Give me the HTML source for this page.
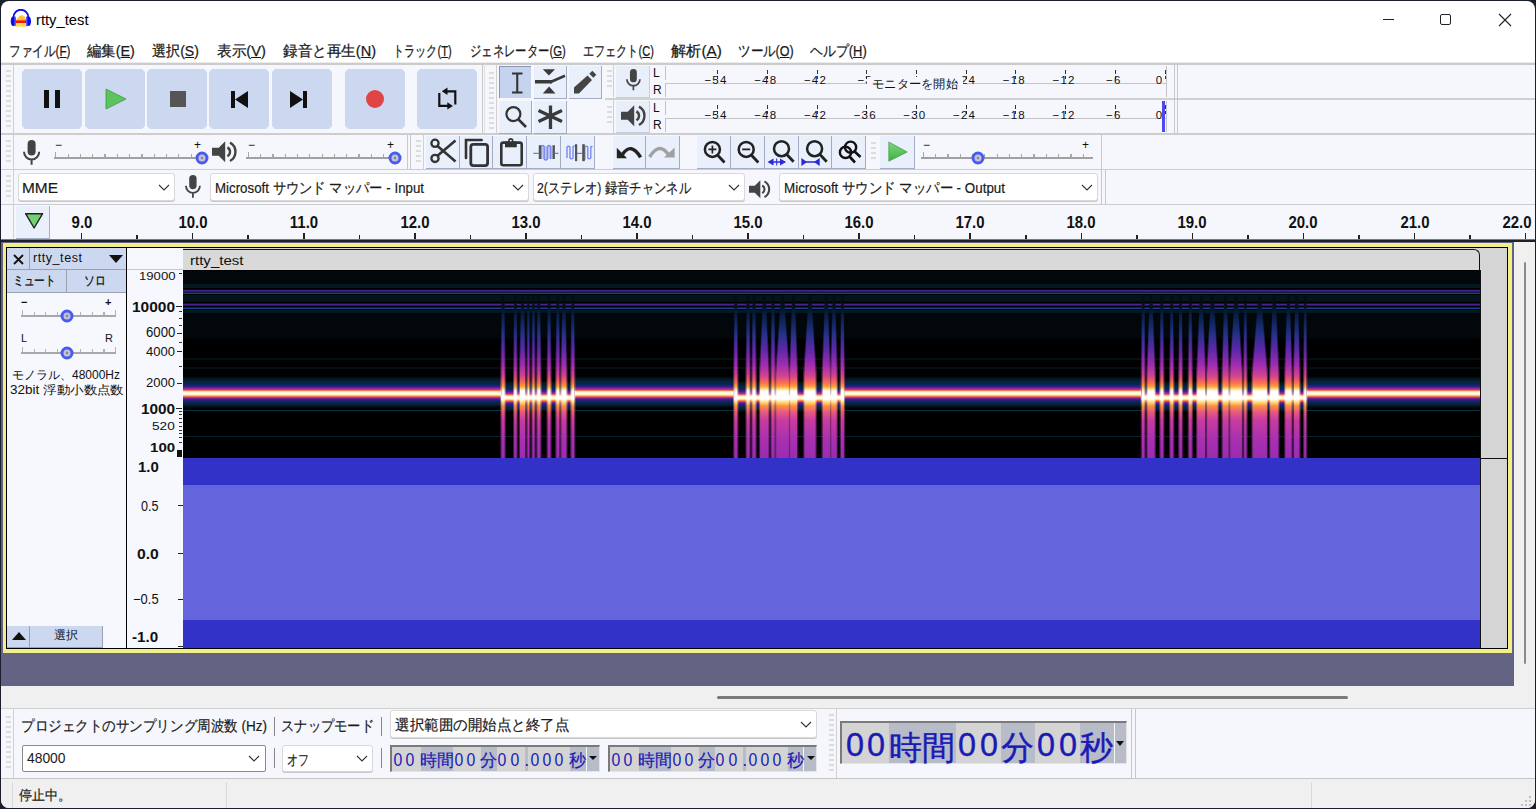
<!DOCTYPE html><html><head><meta charset="utf-8"><style>
html,body{margin:0;padding:0;}
body{width:1536px;height:809px;overflow:hidden;background:#1b1e2c;position:relative;font-family:"Liberation Sans", sans-serif;color:#000;}
#win{position:absolute;left:1px;top:1px;width:1534px;height:807px;background:#fff;border-radius:8px;overflow:hidden;}
.a{position:absolute;}
.t{position:absolute;white-space:nowrap;}
.btn{position:absolute;background:#ccd8f0;}
.grip{position:absolute;width:6px;}
</style></head><body><div id="win">
<div class="a" style="left:-1px;top:-1px;width:1536px;height:809px;">
<svg class="a" style="left:10px;top:9px" width="22" height="19" viewBox="0 0 22 19">
<path d="M6 17.5 L6 12 Q7 8 8.5 8.5 Q9.5 5.5 11 7 Q12.5 5 13.5 7.5 Q15 6.5 16 11 L16 17.5 Z" fill="#ffb820" opacity="0.9"/>
<path d="M6 14 H16 V17.5 H6 Z" fill="#ffe060" opacity="0.8"/>
<rect x="6" y="11.4" width="10" height="2.6" fill="#f21800"/>
<path d="M3.6 8 A7.3 7.2 0 0 1 18.2 8" fill="none" stroke="#1010e8" stroke-width="1.9"/>
<ellipse cx="3.35" cy="12.3" rx="2.6" ry="4.8" fill="#0a0ae8"/><ellipse cx="18.4" cy="12.3" rx="2.6" ry="4.8" fill="#0a0ae8"/>
<rect x="4.4" y="7.6" width="1.4" height="9.6" fill="#5a5af0"/><rect x="16" y="7.6" width="1.4" height="9.6" fill="#5a5af0"/>
</svg>
<div id="f1" style="position:absolute;left:36px;top:10.5px;white-space:nowrap;font-size:15px;color:#000;transform:scaleX(0.9839);transform-origin:0 0;">rtty_test</div>
<div style="position:absolute;left:1383px;top:19px;width:11px;height:1px;background:#222;"></div>
<div style="position:absolute;left:1440px;top:14px;width:11px;height:11px;border:1px solid #222;border-radius:2px;box-sizing:border-box;"></div>
<svg class="a" style="left:1498px;top:13px" width="14" height="14" viewBox="0 0 14 14"><path d="M1 1 L13 13 M13 1 L1 13" stroke="#222" stroke-width="1.1"/></svg>
<div id="f2" style="position:absolute;left:8.8px;top:42px;white-space:nowrap;font-size:15px;color:#1a1a1a;-webkit-text-stroke:0.25px #1a1a1a;transform:scaleX(0.7768);transform-origin:0 0;">ファイル(<u>F</u>)</div>
<div id="f3" style="position:absolute;left:86.9px;top:42px;white-space:nowrap;font-size:15px;color:#1a1a1a;-webkit-text-stroke:0.25px #1a1a1a;transform:scaleX(0.9577);transform-origin:0 0;">編集(<u>E</u>)</div>
<div id="f4" style="position:absolute;left:152.3px;top:42px;white-space:nowrap;font-size:15px;color:#1a1a1a;-webkit-text-stroke:0.25px #1a1a1a;transform:scaleX(0.9377);transform-origin:0 0;">選択(<u>S</u>)</div>
<div id="f5" style="position:absolute;left:216.8px;top:42px;white-space:nowrap;font-size:15px;color:#1a1a1a;-webkit-text-stroke:0.25px #1a1a1a;transform:scaleX(0.9757);transform-origin:0 0;">表示(<u>V</u>)</div>
<div id="f6" style="position:absolute;left:283.4px;top:42px;white-space:nowrap;font-size:15px;color:#1a1a1a;-webkit-text-stroke:0.25px #1a1a1a;transform:scaleX(0.9714);transform-origin:0 0;">録音と再生(<u>N</u>)</div>
<div id="f7" style="position:absolute;left:393px;top:42px;white-space:nowrap;font-size:15px;color:#1a1a1a;-webkit-text-stroke:0.25px #1a1a1a;transform:scaleX(0.7414);transform-origin:0 0;">トラック(<u>T</u>)</div>
<div id="f8" style="position:absolute;left:470.2px;top:42px;white-space:nowrap;font-size:15px;color:#1a1a1a;-webkit-text-stroke:0.25px #1a1a1a;transform:scaleX(0.7563);transform-origin:0 0;">ジェネレーター(<u>G</u>)</div>
<div id="f9" style="position:absolute;left:583px;top:42px;white-space:nowrap;font-size:15px;color:#1a1a1a;-webkit-text-stroke:0.25px #1a1a1a;transform:scaleX(0.7408);transform-origin:0 0;">エフェクト(<u>C</u>)</div>
<div id="f10" style="position:absolute;left:670.6px;top:42px;white-space:nowrap;font-size:15px;color:#1a1a1a;-webkit-text-stroke:0.25px #1a1a1a;transform:scaleX(1.0157);transform-origin:0 0;">解析(<u>A</u>)</div>
<div id="f11" style="position:absolute;left:738px;top:42px;white-space:nowrap;font-size:15px;color:#1a1a1a;-webkit-text-stroke:0.25px #1a1a1a;transform:scaleX(0.8354);transform-origin:0 0;">ツール(<u>O</u>)</div>
<div id="f12" style="position:absolute;left:810.2px;top:42px;white-space:nowrap;font-size:15px;color:#1a1a1a;-webkit-text-stroke:0.25px #1a1a1a;transform:scaleX(0.8611);transform-origin:0 0;">ヘルプ(<u>H</u>)</div>
<div style="position:absolute;left:1px;top:63px;width:1534px;height:142px;background:#f5f7fc;"></div>
<div style="position:absolute;left:1px;top:62px;width:1534px;height:1px;background:#ececec;"></div>
<div style="position:absolute;left:1px;top:63px;width:1534px;height:2px;background:#cbcbcb;"></div>
<div style="position:absolute;left:1px;top:133px;width:1534px;height:2px;background:#cdcdcd;"></div>
<div style="position:absolute;left:1px;top:169px;width:1534px;height:1px;background:#cdcdcd;"></div>
<div style="position:absolute;left:1px;top:204px;width:1534px;height:1px;background:#cdcdcd;"></div>
<div style="position:absolute;left:6px;top:70px;width:5px;height:2px;background:#dcdcdc;"></div>
<div style="position:absolute;left:6px;top:75px;width:5px;height:2px;background:#dcdcdc;"></div>
<div style="position:absolute;left:6px;top:80px;width:5px;height:2px;background:#dcdcdc;"></div>
<div style="position:absolute;left:6px;top:85px;width:5px;height:2px;background:#dcdcdc;"></div>
<div style="position:absolute;left:6px;top:90px;width:5px;height:2px;background:#dcdcdc;"></div>
<div style="position:absolute;left:6px;top:95px;width:5px;height:2px;background:#dcdcdc;"></div>
<div style="position:absolute;left:6px;top:100px;width:5px;height:2px;background:#dcdcdc;"></div>
<div style="position:absolute;left:6px;top:105px;width:5px;height:2px;background:#dcdcdc;"></div>
<div style="position:absolute;left:6px;top:110px;width:5px;height:2px;background:#dcdcdc;"></div>
<div style="position:absolute;left:6px;top:115px;width:5px;height:2px;background:#dcdcdc;"></div>
<div style="position:absolute;left:6px;top:120px;width:5px;height:2px;background:#dcdcdc;"></div>
<div style="position:absolute;left:6px;top:125px;width:5px;height:2px;background:#dcdcdc;"></div>
<div style="position:absolute;left:13px;top:64px;width:1px;height:69px;background:#d0d0d0;"></div>
<div class="btn" style="left:22px;top:69px;width:60px;height:60px;clip-path:polygon(3px 0,57px 0,60px 3px,60px 57px,57px 60px,3px 60px,0 57px,0 3px);"></div>
<div class="btn" style="left:85px;top:69px;width:60px;height:60px;clip-path:polygon(3px 0,57px 0,60px 3px,60px 57px,57px 60px,3px 60px,0 57px,0 3px);"></div>
<div class="btn" style="left:147px;top:69px;width:60px;height:60px;clip-path:polygon(3px 0,57px 0,60px 3px,60px 57px,57px 60px,3px 60px,0 57px,0 3px);"></div>
<div class="btn" style="left:209px;top:69px;width:60px;height:60px;clip-path:polygon(3px 0,57px 0,60px 3px,60px 57px,57px 60px,3px 60px,0 57px,0 3px);"></div>
<div class="btn" style="left:272px;top:69px;width:60px;height:60px;clip-path:polygon(3px 0,57px 0,60px 3px,60px 57px,57px 60px,3px 60px,0 57px,0 3px);"></div>
<div class="btn" style="left:345px;top:69px;width:60px;height:60px;clip-path:polygon(3px 0,57px 0,60px 3px,60px 57px,57px 60px,3px 60px,0 57px,0 3px);"></div>
<div class="btn" style="left:417px;top:69px;width:60px;height:60px;clip-path:polygon(3px 0,57px 0,60px 3px,60px 57px,57px 60px,3px 60px,0 57px,0 3px);"></div>
<svg class="a" style="left:22px;top:69px" width="460" height="60" viewBox="0 0 460 60">
<rect x="22" y="21" width="5" height="18" fill="#111"/><rect x="33" y="21" width="5" height="18" fill="#111"/>
<path d="M84 20 L104 30 L84 40 Z" fill="#5cc45c" stroke="#3c9a3c" stroke-width="0.8"/>
<rect x="148" y="22" width="16" height="16" fill="#555"/>
<rect x="209" y="22" width="4" height="17" fill="#111"/><path d="M226 22 L213 30.5 L226 39 Z" fill="#111"/>
<path d="M268 22 L281 30.5 L268 39 Z" fill="#111"/><rect x="281" y="22" width="4" height="17" fill="#111"/>
<circle cx="353" cy="30" r="9" fill="#e04444"/>
<path d="M417.3 24.1 V36.9 H427" fill="none" stroke="#111" stroke-width="2.2"/>
<path d="M424 22.3 H433.3 V35.5" fill="none" stroke="#111" stroke-width="2.2"/>
<path d="M419.8 22.3 L425.5 18.6 V26 Z" fill="#111"/>
<path d="M431 36.9 L425.3 33.2 V40.6 Z" fill="#111"/>
</svg>
<div style="position:absolute;left:482px;top:64px;width:1px;height:69px;background:#c8c8c8;"></div>
<div style="position:absolute;left:484px;top:64px;width:1px;height:69px;background:#e0e0e0;"></div>
<div style="position:absolute;left:488.7px;top:71.5px;width:5px;height:2px;background:#dcdcdc;"></div>
<div style="position:absolute;left:488.7px;top:76.5px;width:5px;height:2px;background:#dcdcdc;"></div>
<div style="position:absolute;left:488.7px;top:81.5px;width:5px;height:2px;background:#dcdcdc;"></div>
<div style="position:absolute;left:488.7px;top:86.5px;width:5px;height:2px;background:#dcdcdc;"></div>
<div style="position:absolute;left:488.7px;top:91.5px;width:5px;height:2px;background:#dcdcdc;"></div>
<div style="position:absolute;left:488.7px;top:96.5px;width:5px;height:2px;background:#dcdcdc;"></div>
<div style="position:absolute;left:488.7px;top:101.5px;width:5px;height:2px;background:#dcdcdc;"></div>
<div style="position:absolute;left:488.7px;top:106.5px;width:5px;height:2px;background:#dcdcdc;"></div>
<div style="position:absolute;left:488.7px;top:111.5px;width:5px;height:2px;background:#dcdcdc;"></div>
<div style="position:absolute;left:488.7px;top:116.5px;width:5px;height:2px;background:#dcdcdc;"></div>
<div style="position:absolute;left:488.7px;top:121.5px;width:5px;height:2px;background:#dcdcdc;"></div>
<div style="position:absolute;left:488.7px;top:126.5px;width:5px;height:2px;background:#dcdcdc;"></div>
<div style="position:absolute;left:496px;top:64px;width:1px;height:69px;background:#d0d0d0;"></div>
<div style="position:absolute;left:499px;top:66px;width:32px;height:32px;background:#c5d3ee;border-left:1px solid #8a96b4;border-top:1px solid #8a96b4;box-sizing:border-box;"></div>
<div style="position:absolute;left:534px;top:66px;width:33px;height:33px;background:#e9f0fc;border-right:1px solid #a4acc4;border-bottom:1px solid #a4acc4;box-sizing:border-box;"></div>
<div style="position:absolute;left:569px;top:66px;width:33px;height:33px;background:#e9f0fc;border-right:1px solid #a4acc4;border-bottom:1px solid #a4acc4;box-sizing:border-box;"></div>
<div style="position:absolute;left:499px;top:101px;width:33px;height:33px;background:#e9f0fc;border-right:1px solid #a4acc4;border-bottom:1px solid #a4acc4;box-sizing:border-box;"></div>
<div style="position:absolute;left:534px;top:101px;width:33px;height:33px;background:#e9f0fc;border-right:1px solid #a4acc4;border-bottom:1px solid #a4acc4;box-sizing:border-box;"></div>
<svg class="a" style="left:499px;top:66px" width="110" height="68" viewBox="0 0 110 68">
<path d="M13 7.5 H23.5 M18.25 7.5 V26.5 M13 26.5 H23.5" stroke="#333" stroke-width="2.1" fill="none"/>
<path d="M43.8 3.3 H56 L49.9 9.5 Z M43.8 27.5 H56.5 L50.1 20.5 Z" fill="#3a3a3a"/>
<path d="M36 15.8 H53" stroke="#3a3a3a" stroke-width="3.6"/><path d="M51 16.2 L66 9.8" stroke="#3a3a3a" stroke-width="2.6"/>
<path d="M75 21.5 L88.5 9.5 L93 14 L80 27.5 H75 Z" fill="#444"/><path d="M90.3 7.8 L93.3 4.8 L97.3 8.8 L94.3 11.8 Z" fill="#444"/>
<circle cx="14.4" cy="48.1" r="7" fill="none" stroke="#333" stroke-width="2.2"/><path d="M19.5 53.5 L27 61" stroke="#333" stroke-width="2.6"/>
<path d="M51.5 39.5 V63 M39.5 44.5 L63 55.5 M39.5 55.5 L63 44.5" stroke="#3a3a3a" stroke-width="3.3"/>
</svg>
<div style="position:absolute;left:607px;top:70px;width:5px;height:2px;background:#dcdcdc;"></div>
<div style="position:absolute;left:607px;top:75px;width:5px;height:2px;background:#dcdcdc;"></div>
<div style="position:absolute;left:607px;top:80px;width:5px;height:2px;background:#dcdcdc;"></div>
<div style="position:absolute;left:607px;top:85px;width:5px;height:2px;background:#dcdcdc;"></div>
<div style="position:absolute;left:613px;top:64px;width:1px;height:33px;background:#d0d0d0;"></div>
<div style="position:absolute;left:607px;top:106px;width:5px;height:2px;background:#dcdcdc;"></div>
<div style="position:absolute;left:607px;top:111px;width:5px;height:2px;background:#dcdcdc;"></div>
<div style="position:absolute;left:607px;top:116px;width:5px;height:2px;background:#dcdcdc;"></div>
<div style="position:absolute;left:607px;top:121px;width:5px;height:2px;background:#dcdcdc;"></div>
<div style="position:absolute;left:613px;top:100px;width:1px;height:33px;background:#d0d0d0;"></div>
<div style="position:absolute;left:605px;top:98px;width:930px;height:2px;background:#d0d0d0;"></div>
<div style="position:absolute;left:616px;top:66px;width:34px;height:32px;background:#e8effb;border-right:1px solid #c8cde0;border-bottom:1px solid #c8cde0;box-sizing:border-box;"></div>
<div style="position:absolute;left:616px;top:101px;width:34px;height:32px;background:#e8effb;border-right:1px solid #c8cde0;border-bottom:1px solid #c8cde0;box-sizing:border-box;"></div>
<svg class="a" style="left:624px;top:68px" width="22" height="28" viewBox="-2 -1 22 28"><g transform="scale(0.86)">
<rect x="4.6" y="0" width="8" height="15.5" rx="4" fill="#444"/><path d="M1 11.8 A7.6 7.6 0 0 0 16.2 11.8 M8.6 19.4 V24.8" stroke="#444" stroke-width="2" fill="none"/></g></svg>
<svg class="a" style="left:620px;top:104px" width="26" height="24" viewBox="-1 -1 26 24"><g transform="scale(1.0)">
<path d="M0 6.8 H6.7 L13.2 0.3 V21.3 L6.7 14.8 H0 Z" fill="#444"/><path d="M15.4 6.4 A5 5 0 0 1 15.4 15.2" stroke="#444" stroke-width="2.4" fill="none"/><path d="M18 1.6 A10.5 10.5 0 0 1 18 20" stroke="#444" stroke-width="2.4" fill="none"/></g></svg>
<div style="position:absolute;left:653px;top:66px;white-space:nowrap;font-size:12px;color:#111;">L</div>
<div style="position:absolute;left:653px;top:83px;white-space:nowrap;font-size:12px;color:#111;">R</div>
<div style="position:absolute;left:665px;top:67px;width:500px;height:31px;background:#f5f7fc;"></div>
<div style="position:absolute;left:665px;top:83px;width:501px;height:1px;background:#c4c4c4;"></div>
<div style="position:absolute;left:665px;top:66px;width:1px;height:14px;background:#c4c4c4;"></div>
<div style="position:absolute;left:665px;top:83px;width:1px;height:14px;background:#c4c4c4;"></div>
<div style="position:absolute;left:653px;top:101px;white-space:nowrap;font-size:12px;color:#111;">L</div>
<div style="position:absolute;left:653px;top:118px;white-space:nowrap;font-size:12px;color:#111;">R</div>
<div style="position:absolute;left:665px;top:102px;width:500px;height:31px;background:#f5f7fc;"></div>
<div style="position:absolute;left:665px;top:118px;width:501px;height:1px;background:#c4c4c4;"></div>
<div style="position:absolute;left:665px;top:101px;width:1px;height:14px;background:#c4c4c4;"></div>
<div style="position:absolute;left:665px;top:118px;width:1px;height:14px;background:#c4c4c4;"></div>
<div style="position:absolute;left:717.0px;top:70px;width:1px;height:4px;background:#333;"></div>
<div style="position:absolute;left:717.0px;top:76px;width:1px;height:3px;background:#333;"></div>
<div style="position:absolute;left:696.0px;top:74px;white-space:nowrap;font-size:11.5px;width:40px;text-align:center;color:#111;letter-spacing:1.2px;">&minus;54</div>
<div style="position:absolute;left:717.0px;top:105px;width:1px;height:4px;background:#333;"></div>
<div style="position:absolute;left:717.0px;top:111px;width:1px;height:3px;background:#333;"></div>
<div style="position:absolute;left:696.0px;top:109px;white-space:nowrap;font-size:11.5px;width:40px;text-align:center;color:#111;letter-spacing:1.2px;">&minus;54</div>
<div style="position:absolute;left:766.7px;top:70px;width:1px;height:4px;background:#333;"></div>
<div style="position:absolute;left:766.7px;top:76px;width:1px;height:3px;background:#333;"></div>
<div style="position:absolute;left:745.7px;top:74px;white-space:nowrap;font-size:11.5px;width:40px;text-align:center;color:#111;letter-spacing:1.2px;">&minus;48</div>
<div style="position:absolute;left:766.7px;top:105px;width:1px;height:4px;background:#333;"></div>
<div style="position:absolute;left:766.7px;top:111px;width:1px;height:3px;background:#333;"></div>
<div style="position:absolute;left:745.7px;top:109px;white-space:nowrap;font-size:11.5px;width:40px;text-align:center;color:#111;letter-spacing:1.2px;">&minus;48</div>
<div style="position:absolute;left:816.5px;top:70px;width:1px;height:4px;background:#333;"></div>
<div style="position:absolute;left:816.5px;top:76px;width:1px;height:3px;background:#333;"></div>
<div style="position:absolute;left:795.5px;top:74px;white-space:nowrap;font-size:11.5px;width:40px;text-align:center;color:#111;letter-spacing:1.2px;">&minus;42</div>
<div style="position:absolute;left:816.5px;top:105px;width:1px;height:4px;background:#333;"></div>
<div style="position:absolute;left:816.5px;top:111px;width:1px;height:3px;background:#333;"></div>
<div style="position:absolute;left:795.5px;top:109px;white-space:nowrap;font-size:11.5px;width:40px;text-align:center;color:#111;letter-spacing:1.2px;">&minus;42</div>
<div style="position:absolute;left:866.2px;top:70px;width:1px;height:4px;background:#333;"></div>
<div style="position:absolute;left:866.2px;top:76px;width:1px;height:3px;background:#333;"></div>
<div style="position:absolute;left:845.2px;top:74px;white-space:nowrap;font-size:11.5px;width:40px;text-align:center;color:#111;letter-spacing:1.2px;">&minus;3</div>
<div style="position:absolute;left:866.2px;top:105px;width:1px;height:4px;background:#333;"></div>
<div style="position:absolute;left:866.2px;top:111px;width:1px;height:3px;background:#333;"></div>
<div style="position:absolute;left:845.2px;top:109px;white-space:nowrap;font-size:11.5px;width:40px;text-align:center;color:#111;letter-spacing:1.2px;">&minus;36</div>
<div style="position:absolute;left:915.9px;top:70px;width:1px;height:4px;background:#333;"></div>
<div style="position:absolute;left:915.9px;top:76px;width:1px;height:3px;background:#333;"></div>
<div style="position:absolute;left:915.9px;top:105px;width:1px;height:4px;background:#333;"></div>
<div style="position:absolute;left:915.9px;top:111px;width:1px;height:3px;background:#333;"></div>
<div style="position:absolute;left:894.9px;top:109px;white-space:nowrap;font-size:11.5px;width:40px;text-align:center;color:#111;letter-spacing:1.2px;">&minus;30</div>
<div style="position:absolute;left:965.6px;top:70px;width:1px;height:4px;background:#333;"></div>
<div style="position:absolute;left:965.6px;top:76px;width:1px;height:3px;background:#333;"></div>
<div style="position:absolute;left:944.6px;top:74px;white-space:nowrap;font-size:11.5px;width:40px;text-align:center;color:#111;letter-spacing:1.2px;">&minus;24</div>
<div style="position:absolute;left:965.6px;top:105px;width:1px;height:4px;background:#333;"></div>
<div style="position:absolute;left:965.6px;top:111px;width:1px;height:3px;background:#333;"></div>
<div style="position:absolute;left:944.6px;top:109px;white-space:nowrap;font-size:11.5px;width:40px;text-align:center;color:#111;letter-spacing:1.2px;">&minus;24</div>
<div style="position:absolute;left:1015.4px;top:70px;width:1px;height:4px;background:#333;"></div>
<div style="position:absolute;left:1015.4px;top:76px;width:1px;height:3px;background:#333;"></div>
<div style="position:absolute;left:994.4px;top:74px;white-space:nowrap;font-size:11.5px;width:40px;text-align:center;color:#111;letter-spacing:1.2px;">&minus;18</div>
<div style="position:absolute;left:1015.4px;top:105px;width:1px;height:4px;background:#333;"></div>
<div style="position:absolute;left:1015.4px;top:111px;width:1px;height:3px;background:#333;"></div>
<div style="position:absolute;left:994.4px;top:109px;white-space:nowrap;font-size:11.5px;width:40px;text-align:center;color:#111;letter-spacing:1.2px;">&minus;18</div>
<div style="position:absolute;left:1065.1px;top:70px;width:1px;height:4px;background:#333;"></div>
<div style="position:absolute;left:1065.1px;top:76px;width:1px;height:3px;background:#333;"></div>
<div style="position:absolute;left:1044.1px;top:74px;white-space:nowrap;font-size:11.5px;width:40px;text-align:center;color:#111;letter-spacing:1.2px;">&minus;12</div>
<div style="position:absolute;left:1065.1px;top:105px;width:1px;height:4px;background:#333;"></div>
<div style="position:absolute;left:1065.1px;top:111px;width:1px;height:3px;background:#333;"></div>
<div style="position:absolute;left:1044.1px;top:109px;white-space:nowrap;font-size:11.5px;width:40px;text-align:center;color:#111;letter-spacing:1.2px;">&minus;12</div>
<div style="position:absolute;left:1114.8px;top:70px;width:1px;height:4px;background:#333;"></div>
<div style="position:absolute;left:1114.8px;top:76px;width:1px;height:3px;background:#333;"></div>
<div style="position:absolute;left:1093.8px;top:74px;white-space:nowrap;font-size:11.5px;width:40px;text-align:center;color:#111;letter-spacing:1.2px;">&minus;6</div>
<div style="position:absolute;left:1114.8px;top:105px;width:1px;height:4px;background:#333;"></div>
<div style="position:absolute;left:1114.8px;top:111px;width:1px;height:3px;background:#333;"></div>
<div style="position:absolute;left:1093.8px;top:109px;white-space:nowrap;font-size:11.5px;width:40px;text-align:center;color:#111;letter-spacing:1.2px;">&minus;6</div>
<div style="position:absolute;left:1164.6px;top:70px;width:1px;height:4px;background:#333;"></div>
<div style="position:absolute;left:1164.6px;top:76px;width:1px;height:3px;background:#333;"></div>
<div style="position:absolute;left:1139.5px;top:74px;white-space:nowrap;font-size:11.5px;width:40px;text-align:center;color:#111;letter-spacing:1.2px;">0</div>
<div style="position:absolute;left:1164.6px;top:105px;width:1px;height:4px;background:#333;"></div>
<div style="position:absolute;left:1164.6px;top:111px;width:1px;height:3px;background:#333;"></div>
<div style="position:absolute;left:1139.5px;top:109px;white-space:nowrap;font-size:11.5px;width:40px;text-align:center;color:#111;letter-spacing:1.2px;">0</div>
<div style="position:absolute;left:866.5px;top:77px;width:96px;height:13px;background:#f5f7fc;"></div>
<div id="f13" style="position:absolute;left:871.5px;top:75.5px;white-space:nowrap;font-size:12px;color:#111;transform:scaleX(1.0238);transform-origin:0 0;">モニターを開始</div>
<div style="position:absolute;left:1162px;top:101px;width:2.5px;height:31px;background:#4a4af0;"></div>
<div style="position:absolute;left:1166px;top:66px;width:1px;height:31px;background:#c4c4c4;"></div>
<div style="position:absolute;left:1166px;top:101px;width:1px;height:31px;background:#c4c4c4;"></div>
<div style="position:absolute;left:1174px;top:64px;width:1px;height:69px;background:#c8c8c8;"></div>
<div style="position:absolute;left:1177px;top:64px;width:1px;height:69px;background:#c8c8c8;"></div>
<div style="position:absolute;left:6px;top:140px;width:5px;height:2px;background:#dcdcdc;"></div>
<div style="position:absolute;left:6px;top:145px;width:5px;height:2px;background:#dcdcdc;"></div>
<div style="position:absolute;left:6px;top:150px;width:5px;height:2px;background:#dcdcdc;"></div>
<div style="position:absolute;left:6px;top:155px;width:5px;height:2px;background:#dcdcdc;"></div>
<div style="position:absolute;left:6px;top:160px;width:5px;height:2px;background:#dcdcdc;"></div>
<div style="position:absolute;left:13px;top:135px;width:1px;height:34px;background:#d0d0d0;"></div>
<svg class="a" style="left:21.4px;top:139.2px" width="22" height="28" viewBox="-2 -1 22 28"><g transform="scale(1.0)">
<rect x="4.6" y="0" width="8" height="15.5" rx="4" fill="#444"/><path d="M1 11.8 A7.6 7.6 0 0 0 16.2 11.8 M8.6 19.4 V24.8" stroke="#444" stroke-width="2" fill="none"/></g></svg>
<div style="position:absolute;left:53.5px;top:157px;width:148.5px;height:2px;background:#a0a0a0;"></div>
<div style="position:absolute;left:202px;top:157px;width:6px;height:2px;background:#a0a0a0;"></div>
<div style="position:absolute;left:55.2px;top:152px;width:1.3px;height:5px;background:#a8a8a8;"></div>
<div style="position:absolute;left:67.5px;top:154px;width:1.3px;height:3px;background:#a8a8a8;"></div>
<div style="position:absolute;left:79.8px;top:154px;width:1.3px;height:3px;background:#a8a8a8;"></div>
<div style="position:absolute;left:92.1px;top:154px;width:1.3px;height:3px;background:#a8a8a8;"></div>
<div style="position:absolute;left:104.4px;top:154px;width:1.3px;height:3px;background:#a8a8a8;"></div>
<div style="position:absolute;left:116.7px;top:154px;width:1.3px;height:3px;background:#a8a8a8;"></div>
<div style="position:absolute;left:129.0px;top:154px;width:1.3px;height:3px;background:#a8a8a8;"></div>
<div style="position:absolute;left:141.3px;top:154px;width:1.3px;height:3px;background:#a8a8a8;"></div>
<div style="position:absolute;left:153.6px;top:154px;width:1.3px;height:3px;background:#a8a8a8;"></div>
<div style="position:absolute;left:165.9px;top:154px;width:1.3px;height:3px;background:#a8a8a8;"></div>
<div style="position:absolute;left:178.2px;top:154px;width:1.3px;height:3px;background:#a8a8a8;"></div>
<div style="position:absolute;left:190.5px;top:154px;width:1.3px;height:3px;background:#a8a8a8;"></div>
<div style="position:absolute;left:202.8px;top:154px;width:1.3px;height:3px;background:#a8a8a8;"></div>
<svg class="a" style="left:195px;top:151px" width="14" height="14"><circle cx="7" cy="7" r="5" fill="#c4c6d8" stroke="#4a5af0" stroke-width="3"/><circle cx="7" cy="7" r="1.4" fill="#8a8a9a"/></svg>
<div style="position:absolute;left:55px;top:138px;white-space:nowrap;font-size:12px;color:#111;">&minus;</div>
<div style="position:absolute;left:194px;top:138px;white-space:nowrap;font-size:12px;color:#111;">+</div>
<svg class="a" style="left:211.3px;top:140.2px" width="26" height="24" viewBox="-1 -1 26 24"><g transform="scale(1.0)">
<path d="M0 6.8 H6.7 L13.2 0.3 V21.3 L6.7 14.8 H0 Z" fill="#444"/><path d="M15.4 6.4 A5 5 0 0 1 15.4 15.2" stroke="#444" stroke-width="2.4" fill="none"/><path d="M18 1.6 A10.5 10.5 0 0 1 18 20" stroke="#444" stroke-width="2.4" fill="none"/></g></svg>
<div style="position:absolute;left:246px;top:157px;width:149px;height:2px;background:#a0a0a0;"></div>
<div style="position:absolute;left:395px;top:157px;width:6px;height:2px;background:#a0a0a0;"></div>
<div style="position:absolute;left:247.7px;top:152px;width:1.3px;height:5px;background:#a8a8a8;"></div>
<div style="position:absolute;left:260.0px;top:154px;width:1.3px;height:3px;background:#a8a8a8;"></div>
<div style="position:absolute;left:272.3px;top:154px;width:1.3px;height:3px;background:#a8a8a8;"></div>
<div style="position:absolute;left:284.6px;top:154px;width:1.3px;height:3px;background:#a8a8a8;"></div>
<div style="position:absolute;left:296.9px;top:154px;width:1.3px;height:3px;background:#a8a8a8;"></div>
<div style="position:absolute;left:309.2px;top:154px;width:1.3px;height:3px;background:#a8a8a8;"></div>
<div style="position:absolute;left:321.5px;top:154px;width:1.3px;height:3px;background:#a8a8a8;"></div>
<div style="position:absolute;left:333.8px;top:154px;width:1.3px;height:3px;background:#a8a8a8;"></div>
<div style="position:absolute;left:346.1px;top:154px;width:1.3px;height:3px;background:#a8a8a8;"></div>
<div style="position:absolute;left:358.4px;top:154px;width:1.3px;height:3px;background:#a8a8a8;"></div>
<div style="position:absolute;left:370.7px;top:154px;width:1.3px;height:3px;background:#a8a8a8;"></div>
<div style="position:absolute;left:383.0px;top:154px;width:1.3px;height:3px;background:#a8a8a8;"></div>
<div style="position:absolute;left:395.3px;top:154px;width:1.3px;height:3px;background:#a8a8a8;"></div>
<svg class="a" style="left:388px;top:151px" width="14" height="14"><circle cx="7" cy="7" r="5" fill="#c4c6d8" stroke="#4a5af0" stroke-width="3"/><circle cx="7" cy="7" r="1.4" fill="#8a8a9a"/></svg>
<div style="position:absolute;left:248px;top:138px;white-space:nowrap;font-size:12px;color:#111;">&minus;</div>
<div style="position:absolute;left:387px;top:138px;white-space:nowrap;font-size:12px;color:#111;">+</div>
<div style="position:absolute;left:407px;top:135px;width:1px;height:34px;background:#c8c8c8;"></div>
<div style="position:absolute;left:410px;top:135px;width:1px;height:34px;background:#c8c8c8;"></div>
<div style="position:absolute;left:416px;top:140px;width:5px;height:2px;background:#dcdcdc;"></div>
<div style="position:absolute;left:416px;top:145px;width:5px;height:2px;background:#dcdcdc;"></div>
<div style="position:absolute;left:416px;top:150px;width:5px;height:2px;background:#dcdcdc;"></div>
<div style="position:absolute;left:416px;top:155px;width:5px;height:2px;background:#dcdcdc;"></div>
<div style="position:absolute;left:416px;top:160px;width:5px;height:2px;background:#dcdcdc;"></div>
<div style="position:absolute;left:423px;top:135px;width:1px;height:34px;background:#d0d0d0;"></div>
<div style="position:absolute;left:426px;top:136px;width:34px;height:33px;background:#e9f0fc;border-right:1px solid #a4acc4;border-bottom:1px solid #a4acc4;box-sizing:border-box;"></div>
<div style="position:absolute;left:460px;top:136px;width:33px;height:33px;background:#e9f0fc;border-right:1px solid #a4acc4;border-bottom:1px solid #a4acc4;box-sizing:border-box;"></div>
<div style="position:absolute;left:493px;top:136px;width:34px;height:33px;background:#e9f0fc;border-right:1px solid #a4acc4;border-bottom:1px solid #a4acc4;box-sizing:border-box;"></div>
<div style="position:absolute;left:527px;top:136px;width:34px;height:33px;background:#e9f0fc;border-right:1px solid #a4acc4;border-bottom:1px solid #a4acc4;box-sizing:border-box;"></div>
<div style="position:absolute;left:561px;top:136px;width:34px;height:33px;background:#e9f0fc;border-right:1px solid #a4acc4;border-bottom:1px solid #a4acc4;box-sizing:border-box;"></div>
<div style="position:absolute;left:613px;top:136px;width:33px;height:33px;background:#e9f0fc;border-right:1px solid #a4acc4;border-bottom:1px solid #a4acc4;box-sizing:border-box;"></div>
<div style="position:absolute;left:646px;top:136px;width:34px;height:33px;background:#e9f0fc;border-right:1px solid #a4acc4;border-bottom:1px solid #a4acc4;box-sizing:border-box;"></div>
<svg class="a" style="left:426px;top:136px" width="260" height="33" viewBox="0 0 260 33">
<circle cx="9" cy="7.3" r="3.6" fill="none" stroke="#333" stroke-width="2.3"/><circle cx="9" cy="22.4" r="3.6" fill="none" stroke="#333" stroke-width="2.3"/>
<path d="M11.5 10 L29.5 25.5" stroke="#333" stroke-width="2.6"/><path d="M11.5 19.8 L29.5 4.5" stroke="#333" stroke-width="2.6"/>
<path d="M40 22 V4 H55.6" fill="none" stroke="#333" stroke-width="2.6" stroke-linecap="round"/><rect x="44.8" y="8.4" width="16.8" height="21.2" rx="2.5" fill="none" stroke="#333" stroke-width="2.8"/>
<rect x="75.3" y="6.6" width="20.4" height="22.6" rx="2" fill="none" stroke="#333" stroke-width="2.6"/><rect x="79" y="5.5" width="11.8" height="5.8" fill="#333"/><circle cx="84.8" cy="4.6" r="2.6" fill="#333"/><circle cx="84.8" cy="4.6" r="0.9" fill="#fff"/>
<path d="M107.3 17.4 H112.75 M128.9 17.4 H132.5" stroke="#6a7cf0" stroke-width="1.3"/>
<path d="M115 10 H126.5 V23 H115 Z" fill="#aab6f2" opacity="0.7"/>
<path d="M115 23 V10.5 Q116.6 8.5 118.2 10.5 V23 Q119.8 25 121.4 23 V10.5 Q123 8.5 124.6 10.5 V23" stroke="#7a8af2" stroke-width="1.4" fill="none"/>
<rect x="112.75" y="9.2" width="2.4" height="13.8" fill="#555"/><rect x="126.5" y="9.2" width="2.4" height="13.8" fill="#555"/>
<path d="M141 22 V11 Q142.5 9.5 144 11 V22 Q145.5 23.5 147 22 V11 Q148 9.5 149 10" stroke="#7a8af2" stroke-width="1.4" fill="none"/>
<path d="M151 17.4 H156.2" stroke="#6a7cf0" stroke-width="1.3"/>
<path d="M158.8 24 V11 Q160.3 9.5 161.8 11 V22 Q163.3 23.5 164.8 22 V11 Q165.6 10 166.4 11" stroke="#7a8af2" stroke-width="1.4" fill="none"/>
<rect x="149" y="8.2" width="2.2" height="17" fill="#555"/><rect x="156.2" y="8.2" width="2.6" height="17" fill="#555"/>
<path d="M190.8 11.7 V22.2 H201 Z" fill="#222"/><path d="M196.5 18.5 Q205 5.5 214.6 21.4" stroke="#222" stroke-width="3.4" fill="none"/>
<path d="M248.6 11.5 V21.5 H238 Z" fill="#a0a0a0"/><path d="M223.6 21 Q233 5.5 242.5 18.5" stroke="#a0a0a0" stroke-width="3.4" fill="none"/>
</svg>
<div style="position:absolute;left:697px;top:136px;width:34px;height:33px;background:#e9f0fc;border-right:1px solid #a4acc4;border-bottom:1px solid #a4acc4;box-sizing:border-box;"></div>
<div style="position:absolute;left:731px;top:136px;width:34px;height:33px;background:#e9f0fc;border-right:1px solid #a4acc4;border-bottom:1px solid #a4acc4;box-sizing:border-box;"></div>
<div style="position:absolute;left:765px;top:136px;width:34px;height:33px;background:#e9f0fc;border-right:1px solid #a4acc4;border-bottom:1px solid #a4acc4;box-sizing:border-box;"></div>
<div style="position:absolute;left:799px;top:136px;width:33px;height:33px;background:#e9f0fc;border-right:1px solid #a4acc4;border-bottom:1px solid #a4acc4;box-sizing:border-box;"></div>
<div style="position:absolute;left:832px;top:136px;width:34px;height:33px;background:#e9f0fc;border-right:1px solid #a4acc4;border-bottom:1px solid #a4acc4;box-sizing:border-box;"></div>
<svg class="a" style="left:694px;top:134px" width="226" height="36" viewBox="694 134 226 36">
<circle cx="712.4" cy="149.4" r="7.5" fill="none" stroke="#222" stroke-width="2.5"/><path d="M717.5 155 L724.5 162.5" stroke="#222" stroke-width="2.8"/><path d="M708.4 149.4 H716.4 M712.4 145.4 V153.4" stroke="#222" stroke-width="1.7"/>
<circle cx="746.2" cy="149.4" r="7.5" fill="none" stroke="#222" stroke-width="2.5"/><path d="M751.3 155 L758.3 162.5" stroke="#222" stroke-width="2.8"/><path d="M742.2 149.4 H750.2" stroke="#222" stroke-width="1.7"/>
<circle cx="781.5" cy="148.7" r="7.5" fill="none" stroke="#222" stroke-width="2.5"/><path d="M786.6 154.3 L793.6 161.8" stroke="#222" stroke-width="2.8"/>
<path d="M769 162 H785" stroke="#2a2ad8" stroke-width="1.5"/><path d="M767.5 162 L773.5 158.5 V165.5 Z M786 162 L780 158.5 V165.5 Z" fill="#2a2ad8"/><path d="M776.7 158.5 V165.5" stroke="#2a2ad8" stroke-width="1"/>
<circle cx="814.6" cy="148.7" r="7.5" fill="none" stroke="#222" stroke-width="2.5"/><path d="M819.7 154.3 L826.7 161.8" stroke="#222" stroke-width="2.8"/>
<path d="M802 162 H819" stroke="#2a2ad8" stroke-width="1.5"/><path d="M801.4 158 V166 L807 162 Z M819.7 158 V166 L814 162 Z" fill="#2a2ad8"/>
<circle cx="845.5" cy="152.4" r="5.6" fill="none" stroke="#111" stroke-width="2.4"/><circle cx="850.6" cy="147.2" r="5.6" fill="none" stroke="#111" stroke-width="2.4"/><path d="M849.5 156.5 L855 162.5 M854.6 151.5 L860.5 157" stroke="#111" stroke-width="2.6"/>
</svg>
<div style="position:absolute;left:871px;top:142px;width:5px;height:2px;background:#dcdcdc;"></div>
<div style="position:absolute;left:871px;top:147px;width:5px;height:2px;background:#dcdcdc;"></div>
<div style="position:absolute;left:871px;top:152px;width:5px;height:2px;background:#dcdcdc;"></div>
<div style="position:absolute;left:871px;top:157px;width:5px;height:2px;background:#dcdcdc;"></div>
<div style="position:absolute;left:880px;top:136px;width:35px;height:33px;background:#e9f0fc;border-right:1px solid #a4acc4;border-bottom:1px solid #a4acc4;box-sizing:border-box;"></div>
<svg class="a" style="left:880px;top:134px" width="34" height="36"><defs><linearGradient id="pg" x1="0" y1="0" x2="0" y2="1"><stop offset="0" stop-color="#7ad87a"/><stop offset="1" stop-color="#44b044"/></linearGradient></defs><path d="M8.8 8 L27.2 18 L8.8 27.2 Z" fill="url(#pg)" stroke="#3c9a3c" stroke-width="0.7"/></svg>
<div style="position:absolute;left:921px;top:157px;width:57px;height:2px;background:#a0a0a0;"></div>
<div style="position:absolute;left:978px;top:157px;width:115px;height:2px;background:#a0a0a0;"></div>
<div style="position:absolute;left:922.7px;top:152px;width:1.3px;height:5px;background:#a8a8a8;"></div>
<div style="position:absolute;left:935.0px;top:154px;width:1.3px;height:3px;background:#a8a8a8;"></div>
<div style="position:absolute;left:947.3px;top:154px;width:1.3px;height:3px;background:#a8a8a8;"></div>
<div style="position:absolute;left:959.6px;top:154px;width:1.3px;height:3px;background:#a8a8a8;"></div>
<div style="position:absolute;left:971.9px;top:154px;width:1.3px;height:3px;background:#a8a8a8;"></div>
<div style="position:absolute;left:984.2px;top:154px;width:1.3px;height:3px;background:#a8a8a8;"></div>
<div style="position:absolute;left:996.5px;top:154px;width:1.3px;height:3px;background:#a8a8a8;"></div>
<div style="position:absolute;left:1008.8px;top:154px;width:1.3px;height:3px;background:#a8a8a8;"></div>
<div style="position:absolute;left:1021.1px;top:154px;width:1.3px;height:3px;background:#a8a8a8;"></div>
<div style="position:absolute;left:1033.4px;top:154px;width:1.3px;height:3px;background:#a8a8a8;"></div>
<div style="position:absolute;left:1045.7px;top:154px;width:1.3px;height:3px;background:#a8a8a8;"></div>
<div style="position:absolute;left:1058.0px;top:154px;width:1.3px;height:3px;background:#a8a8a8;"></div>
<div style="position:absolute;left:1070.3px;top:154px;width:1.3px;height:3px;background:#a8a8a8;"></div>
<div style="position:absolute;left:1082.6px;top:154px;width:1.3px;height:3px;background:#a8a8a8;"></div>
<svg class="a" style="left:971px;top:151px" width="14" height="14"><circle cx="7" cy="7" r="5" fill="#c4c6d8" stroke="#4a5af0" stroke-width="3"/><circle cx="7" cy="7" r="1.4" fill="#8a8a9a"/></svg>
<div style="position:absolute;left:923px;top:138px;white-space:nowrap;font-size:12px;color:#111;">&minus;</div>
<div style="position:absolute;left:1082px;top:138px;white-space:nowrap;font-size:12px;color:#111;">+</div>
<div style="position:absolute;left:1101px;top:135px;width:1px;height:70px;background:#c8c8c8;"></div>
<div style="position:absolute;left:1105px;top:170px;width:1px;height:35px;background:#c8c8c8;"></div>
<div style="position:absolute;left:6px;top:175px;width:5px;height:2px;background:#dcdcdc;"></div>
<div style="position:absolute;left:6px;top:180px;width:5px;height:2px;background:#dcdcdc;"></div>
<div style="position:absolute;left:6px;top:185px;width:5px;height:2px;background:#dcdcdc;"></div>
<div style="position:absolute;left:6px;top:190px;width:5px;height:2px;background:#dcdcdc;"></div>
<div style="position:absolute;left:6px;top:195px;width:5px;height:2px;background:#dcdcdc;"></div>
<div style="position:absolute;left:13px;top:170px;width:1px;height:34px;background:#d0d0d0;"></div>
<div class="a" style="left:18px;top:173px;width:157px;height:28px;background:#fff;border:1px solid #d9d9d9;border-radius:3px;box-sizing:border-box;box-shadow:0 1px 0 #c8c8c8;"></div>
<div id="f14" style="position:absolute;left:22px;top:179px;white-space:nowrap;font-size:15px;color:#1a1a1a;-webkit-text-stroke:0.2px #1a1a1a;transform:scaleX(1.0286);transform-origin:0 0;">MME</div>
<svg class="a" style="left:158px;top:184px" width="12" height="7"><path d="M1 1 L6 6 L11 1" stroke="#333" stroke-width="1.1" fill="none"/></svg>
<svg class="a" style="left:183px;top:174px" width="22" height="28" viewBox="-2 -1 22 28"><g transform="scale(0.92)">
<rect x="4.6" y="0" width="8" height="15.5" rx="4" fill="#444"/><path d="M1 11.8 A7.6 7.6 0 0 0 16.2 11.8 M8.6 19.4 V24.8" stroke="#444" stroke-width="2" fill="none"/></g></svg>
<div class="a" style="left:210px;top:173px;width:319px;height:28px;background:#fff;border:1px solid #d9d9d9;border-radius:3px;box-sizing:border-box;box-shadow:0 1px 0 #c8c8c8;"></div>
<div id="f15" style="position:absolute;left:214.5px;top:179px;white-space:nowrap;font-size:15px;color:#1a1a1a;-webkit-text-stroke:0.2px #1a1a1a;transform:scaleX(0.8861);transform-origin:0 0;">Microsoft サウンド マッパー - Input</div>
<svg class="a" style="left:512px;top:184px" width="12" height="7"><path d="M1 1 L6 6 L11 1" stroke="#333" stroke-width="1.1" fill="none"/></svg>
<div class="a" style="left:533px;top:173px;width:212px;height:28px;background:#fff;border:1px solid #d9d9d9;border-radius:3px;box-sizing:border-box;box-shadow:0 1px 0 #c8c8c8;"></div>
<div id="f16" style="position:absolute;left:537px;top:179px;white-space:nowrap;font-size:15px;color:#1a1a1a;-webkit-text-stroke:0.2px #1a1a1a;transform:scaleX(0.8213);transform-origin:0 0;">2(ステレオ) 録音チャンネル</div>
<svg class="a" style="left:728px;top:184px" width="12" height="7"><path d="M1 1 L6 6 L11 1" stroke="#333" stroke-width="1.1" fill="none"/></svg>
<svg class="a" style="left:748px;top:178.5px" width="26" height="24" viewBox="-1 -1 26 24"><g transform="scale(0.86)">
<path d="M0 6.8 H6.7 L13.2 0.3 V21.3 L6.7 14.8 H0 Z" fill="#444"/><path d="M15.4 6.4 A5 5 0 0 1 15.4 15.2" stroke="#444" stroke-width="2.4" fill="none"/><path d="M18 1.6 A10.5 10.5 0 0 1 18 20" stroke="#444" stroke-width="2.4" fill="none"/></g></svg>
<div class="a" style="left:779px;top:173px;width:319px;height:28px;background:#fff;border:1px solid #d9d9d9;border-radius:3px;box-sizing:border-box;box-shadow:0 1px 0 #c8c8c8;"></div>
<div id="f17" style="position:absolute;left:784px;top:179px;white-space:nowrap;font-size:15px;color:#1a1a1a;-webkit-text-stroke:0.2px #1a1a1a;transform:scaleX(0.8928);transform-origin:0 0;">Microsoft サウンド マッパー - Output</div>
<svg class="a" style="left:1081px;top:184px" width="12" height="7"><path d="M1 1 L6 6 L11 1" stroke="#333" stroke-width="1.1" fill="none"/></svg>
<div style="position:absolute;left:1px;top:205px;width:1534px;height:35px;background:#f5f7fc;"></div>
<div style="position:absolute;left:16px;top:206px;width:34px;height:33px;background:#e9f0fc;border-right:1.5px solid #a8b0c4;border-bottom:1.5px solid #a8b0c4;box-sizing:border-box;"></div>
<svg class="a" style="left:24px;top:211px" width="20" height="19"><path d="M1.6 2.7 H18.6 L10.1 17 Z" fill="#72d072" stroke="#222" stroke-width="1.4" stroke-linejoin="round"/></svg>
<div style="position:absolute;left:13px;top:205px;width:1px;height:35px;background:#d0d0d0;"></div>
<div style="position:absolute;left:80.85px;top:232.5px;width:1.5px;height:7px;background:#222;"></div>
<div class="t" style="left:41.60px;top:213px;width:80px;text-align:center;font-size:17px;font-weight:bold;color:#111;transform:scaleX(0.88);">9.0</div>
<div style="position:absolute;left:136.39px;top:235.2px;width:1.5px;height:4px;background:#222;"></div>
<div style="position:absolute;left:191.93px;top:232.5px;width:1.5px;height:7px;background:#222;"></div>
<div class="t" style="left:152.68px;top:213px;width:80px;text-align:center;font-size:17px;font-weight:bold;color:#111;transform:scaleX(0.88);">10.0</div>
<div style="position:absolute;left:247.47px;top:235.2px;width:1.5px;height:4px;background:#222;"></div>
<div style="position:absolute;left:303.01px;top:232.5px;width:1.5px;height:7px;background:#222;"></div>
<div class="t" style="left:263.76px;top:213px;width:80px;text-align:center;font-size:17px;font-weight:bold;color:#111;transform:scaleX(0.88);">11.0</div>
<div style="position:absolute;left:358.55px;top:235.2px;width:1.5px;height:4px;background:#222;"></div>
<div style="position:absolute;left:414.09px;top:232.5px;width:1.5px;height:7px;background:#222;"></div>
<div class="t" style="left:374.84px;top:213px;width:80px;text-align:center;font-size:17px;font-weight:bold;color:#111;transform:scaleX(0.88);">12.0</div>
<div style="position:absolute;left:469.63px;top:235.2px;width:1.5px;height:4px;background:#222;"></div>
<div style="position:absolute;left:525.17px;top:232.5px;width:1.5px;height:7px;background:#222;"></div>
<div class="t" style="left:485.92px;top:213px;width:80px;text-align:center;font-size:17px;font-weight:bold;color:#111;transform:scaleX(0.88);">13.0</div>
<div style="position:absolute;left:580.71px;top:235.2px;width:1.5px;height:4px;background:#222;"></div>
<div style="position:absolute;left:636.25px;top:232.5px;width:1.5px;height:7px;background:#222;"></div>
<div class="t" style="left:597.00px;top:213px;width:80px;text-align:center;font-size:17px;font-weight:bold;color:#111;transform:scaleX(0.88);">14.0</div>
<div style="position:absolute;left:691.79px;top:235.2px;width:1.5px;height:4px;background:#222;"></div>
<div style="position:absolute;left:747.33px;top:232.5px;width:1.5px;height:7px;background:#222;"></div>
<div class="t" style="left:708.08px;top:213px;width:80px;text-align:center;font-size:17px;font-weight:bold;color:#111;transform:scaleX(0.88);">15.0</div>
<div style="position:absolute;left:802.87px;top:235.2px;width:1.5px;height:4px;background:#222;"></div>
<div style="position:absolute;left:858.41px;top:232.5px;width:1.5px;height:7px;background:#222;"></div>
<div class="t" style="left:819.16px;top:213px;width:80px;text-align:center;font-size:17px;font-weight:bold;color:#111;transform:scaleX(0.88);">16.0</div>
<div style="position:absolute;left:913.95px;top:235.2px;width:1.5px;height:4px;background:#222;"></div>
<div style="position:absolute;left:969.49px;top:232.5px;width:1.5px;height:7px;background:#222;"></div>
<div class="t" style="left:930.24px;top:213px;width:80px;text-align:center;font-size:17px;font-weight:bold;color:#111;transform:scaleX(0.88);">17.0</div>
<div style="position:absolute;left:1025.03px;top:235.2px;width:1.5px;height:4px;background:#222;"></div>
<div style="position:absolute;left:1080.57px;top:232.5px;width:1.5px;height:7px;background:#222;"></div>
<div class="t" style="left:1041.32px;top:213px;width:80px;text-align:center;font-size:17px;font-weight:bold;color:#111;transform:scaleX(0.88);">18.0</div>
<div style="position:absolute;left:1136.11px;top:235.2px;width:1.5px;height:4px;background:#222;"></div>
<div style="position:absolute;left:1191.65px;top:232.5px;width:1.5px;height:7px;background:#222;"></div>
<div class="t" style="left:1152.40px;top:213px;width:80px;text-align:center;font-size:17px;font-weight:bold;color:#111;transform:scaleX(0.88);">19.0</div>
<div style="position:absolute;left:1247.19px;top:235.2px;width:1.5px;height:4px;background:#222;"></div>
<div style="position:absolute;left:1302.73px;top:232.5px;width:1.5px;height:7px;background:#222;"></div>
<div class="t" style="left:1263.48px;top:213px;width:80px;text-align:center;font-size:17px;font-weight:bold;color:#111;transform:scaleX(0.88);">20.0</div>
<div style="position:absolute;left:1358.27px;top:235.2px;width:1.5px;height:4px;background:#222;"></div>
<div style="position:absolute;left:1413.81px;top:232.5px;width:1.5px;height:7px;background:#222;"></div>
<div class="t" style="left:1374.56px;top:213px;width:80px;text-align:center;font-size:17px;font-weight:bold;color:#111;transform:scaleX(0.88);">21.0</div>
<div style="position:absolute;left:1469.35px;top:235.2px;width:1.5px;height:4px;background:#222;"></div>
<div style="position:absolute;left:1524.89px;top:232.5px;width:1.5px;height:7px;background:#222;"></div>
<div class="t" style="left:1477.00px;top:213px;width:80px;text-align:center;font-size:17px;font-weight:bold;color:#111;transform:scaleX(0.88);">22.0</div>
<div style="position:absolute;left:1px;top:239px;width:1534px;height:1px;background:#7a7a80;"></div>
<div style="position:absolute;left:1px;top:240px;width:1534px;height:3px;background:#202028;"></div>
<div style="position:absolute;left:1px;top:242px;width:1513px;height:444px;background:#636484;"></div>
<div style="position:absolute;left:3px;top:243px;width:1509px;height:410px;background:#f2ee8a;"></div>
<div style="position:absolute;left:6px;top:247px;width:1502px;height:402px;background:#000;"></div>
<div style="position:absolute;left:7px;top:248px;width:119px;height:400px;background:#f6f8fd;"></div>
<div style="position:absolute;left:127px;top:248px;width:56px;height:400px;background:#f6f8fd;"></div>
<div style="position:absolute;left:183px;top:248px;width:1324px;height:400px;background:#d5d5d5;"></div>
<div style="position:absolute;left:7px;top:248px;width:23px;height:22px;background:#ccd8f0;border-right:1px solid #9aa0b0;border-bottom:1px solid #9aa0b0;box-sizing:border-box;"></div>
<div style="position:absolute;left:30px;top:248px;width:97px;height:22px;background:#ccd8f0;border-right:1px solid #9aa0b0;border-bottom:1px solid #9aa0b0;box-sizing:border-box;"></div>
<div style="position:absolute;left:7px;top:270px;width:60px;height:23px;background:#ccd8f0;border-right:1px solid #9aa0b0;border-bottom:1px solid #9aa0b0;box-sizing:border-box;"></div>
<div style="position:absolute;left:67px;top:270px;width:60px;height:23px;background:#ccd8f0;border-right:1px solid #9aa0b0;border-bottom:1px solid #9aa0b0;box-sizing:border-box;"></div>
<svg class="a" style="left:12px;top:253px" width="13" height="13"><path d="M2 2 L11 11 M11 2 L2 11" stroke="#111" stroke-width="1.8"/></svg>
<div id="f18" style="position:absolute;left:32.5px;top:251px;white-space:nowrap;font-size:12px;color:#111;letter-spacing:0.5px;transform:scaleX(1.0490);transform-origin:0 0;">rtty_test</div>
<svg class="a" style="left:108px;top:254px" width="16" height="10"><path d="M1 1 H15 L8 9 Z" fill="#111"/></svg>
<div id="f19" style="position:absolute;left:12.5px;top:273px;white-space:nowrap;font-size:12.5px;color:#111;-webkit-text-stroke:0.3px #111;transform:scaleX(0.8269);transform-origin:0 0;">ミュート</div>
<div id="f20" style="position:absolute;left:84px;top:273px;white-space:nowrap;font-size:12.5px;color:#111;-webkit-text-stroke:0.3px #111;transform:scaleX(0.8269);transform-origin:0 0;">ソロ</div>
<div style="position:absolute;left:21px;top:295.5px;white-space:nowrap;font-size:11px;color:#111;font-weight:bold;">&minus;</div>
<div style="position:absolute;left:105px;top:295.5px;white-space:nowrap;font-size:11px;color:#111;font-weight:bold;">+</div>
<div style="position:absolute;left:21px;top:315px;width:95px;height:2px;background:#a8a8a8;"></div>
<div style="position:absolute;left:22.0px;top:310px;width:1.2px;height:5px;background:#b4b4b4;"></div>
<div style="position:absolute;left:33.6px;top:312px;width:1.2px;height:3px;background:#b4b4b4;"></div>
<div style="position:absolute;left:45.2px;top:312px;width:1.2px;height:3px;background:#b4b4b4;"></div>
<div style="position:absolute;left:56.9px;top:312px;width:1.2px;height:3px;background:#b4b4b4;"></div>
<div style="position:absolute;left:68.5px;top:312px;width:1.2px;height:3px;background:#b4b4b4;"></div>
<div style="position:absolute;left:80.1px;top:312px;width:1.2px;height:3px;background:#b4b4b4;"></div>
<div style="position:absolute;left:91.8px;top:312px;width:1.2px;height:3px;background:#b4b4b4;"></div>
<div style="position:absolute;left:103.4px;top:312px;width:1.2px;height:3px;background:#b4b4b4;"></div>
<div style="position:absolute;left:115.0px;top:310px;width:1.2px;height:5px;background:#b4b4b4;"></div>
<svg class="a" style="left:60px;top:309px" width="14" height="14"><circle cx="7" cy="7" r="5" fill="#c4c6d8" stroke="#4a5af0" stroke-width="3"/><circle cx="7" cy="7" r="1.4" fill="#8a8a9a"/></svg>
<div style="position:absolute;left:21px;top:332px;white-space:nowrap;font-size:11px;color:#111;">L</div>
<div style="position:absolute;left:105px;top:332px;white-space:nowrap;font-size:11px;color:#111;">R</div>
<div style="position:absolute;left:21px;top:352px;width:95px;height:2px;background:#a8a8a8;"></div>
<div style="position:absolute;left:22.0px;top:347px;width:1.2px;height:5px;background:#b4b4b4;"></div>
<div style="position:absolute;left:33.6px;top:349px;width:1.2px;height:3px;background:#b4b4b4;"></div>
<div style="position:absolute;left:45.2px;top:349px;width:1.2px;height:3px;background:#b4b4b4;"></div>
<div style="position:absolute;left:56.9px;top:349px;width:1.2px;height:3px;background:#b4b4b4;"></div>
<div style="position:absolute;left:68.5px;top:349px;width:1.2px;height:3px;background:#b4b4b4;"></div>
<div style="position:absolute;left:80.1px;top:349px;width:1.2px;height:3px;background:#b4b4b4;"></div>
<div style="position:absolute;left:91.8px;top:349px;width:1.2px;height:3px;background:#b4b4b4;"></div>
<div style="position:absolute;left:103.4px;top:349px;width:1.2px;height:3px;background:#b4b4b4;"></div>
<div style="position:absolute;left:115.0px;top:347px;width:1.2px;height:5px;background:#b4b4b4;"></div>
<svg class="a" style="left:60px;top:346px" width="14" height="14"><circle cx="7" cy="7" r="5" fill="#c4c6d8" stroke="#4a5af0" stroke-width="3"/><circle cx="7" cy="7" r="1.4" fill="#8a8a9a"/></svg>
<div id="f21" style="position:absolute;left:11.5px;top:366.5px;white-space:nowrap;font-size:12px;color:#111;transform:scaleX(0.9996);transform-origin:0 0;">モノラル、48000Hz</div>
<div id="f22" style="position:absolute;left:10px;top:382px;white-space:nowrap;font-size:12px;color:#111;transform:scaleX(1.1247);transform-origin:0 0;">32bit 浮動小数点数</div>
<div style="position:absolute;left:7px;top:626px;width:23px;height:22px;background:#ccd8f0;border-right:1px solid #9aa0b0;border-bottom:1px solid #9aa0b0;box-sizing:border-box;"></div>
<div style="position:absolute;left:30px;top:626px;width:73px;height:22px;background:#ccd8f0;border-right:1px solid #9aa0b0;border-bottom:1px solid #9aa0b0;box-sizing:border-box;"></div>
<svg class="a" style="left:11px;top:631px" width="16" height="10"><path d="M1 9 H15 L8 1 Z" fill="#111"/></svg>
<div style="position:absolute;left:54px;top:627px;white-space:nowrap;font-size:12px;color:#111;">選択</div>
<div style="position:absolute;left:126px;top:248px;width:1px;height:400px;background:#000;"></div>
<div style="position:absolute;left:127px;top:269px;width:56px;height:1px;background:#c8c8c8;"></div>
<div id="f23" style="position:absolute;left:138.57px;top:270.42px;white-space:nowrap;font-size:10.61px;color:#111;transform:scaleX(1.2387);transform-origin:0 0;">19000</div>
<div id="f24" style="position:absolute;left:132.26px;top:298.97px;white-space:nowrap;font-size:14.80px;font-weight:bold;color:#111;transform:scaleX(1.0467);transform-origin:0 0;">10000</div>
<div id="f25" style="position:absolute;left:146.0px;top:324.44px;white-space:nowrap;font-size:13.97px;color:#111;transform:scaleX(0.9428);transform-origin:0 0;">6000</div>
<div id="f26" style="position:absolute;left:146.33px;top:343.95px;white-space:nowrap;font-size:13.41px;color:#111;transform:scaleX(0.9702);transform-origin:0 0;">4000</div>
<div id="f27" style="position:absolute;left:146.33px;top:375.15px;white-space:nowrap;font-size:13.41px;color:#111;transform:scaleX(0.9702);transform-origin:0 0;">2000</div>
<div id="f28" style="position:absolute;left:141.17px;top:400.92px;white-space:nowrap;font-size:14.53px;font-weight:bold;color:#111;transform:scaleX(1.0574);transform-origin:0 0;">1000</div>
<div id="f29" style="position:absolute;left:152.43px;top:420.18px;white-space:nowrap;font-size:11.31px;color:#111;transform:scaleX(1.2052);transform-origin:0 0;">520</div>
<div id="f30" style="position:absolute;left:150.12px;top:439.72px;white-space:nowrap;font-size:13.55px;font-weight:bold;color:#111;transform:scaleX(1.1124);transform-origin:0 0;">100</div>
<div style="position:absolute;left:179px;top:273px;width:3px;height:1px;background:#222;"></div>
<div style="position:absolute;left:176px;top:306px;width:6px;height:1px;background:#222;"></div>
<div style="position:absolute;left:177px;top:333px;width:5px;height:1px;background:#222;"></div>
<div style="position:absolute;left:177px;top:351px;width:5px;height:1px;background:#222;"></div>
<div style="position:absolute;left:177px;top:383px;width:5px;height:1px;background:#222;"></div>
<div style="position:absolute;left:176px;top:408px;width:6px;height:1px;background:#222;"></div>
<div style="position:absolute;left:179px;top:311px;width:3px;height:1px;background:#333;"></div>
<div style="position:absolute;left:179px;top:318px;width:3px;height:1px;background:#333;"></div>
<div style="position:absolute;left:179px;top:325px;width:3px;height:1px;background:#333;"></div>
<div style="position:absolute;left:179px;top:342px;width:3px;height:1px;background:#333;"></div>
<div style="position:absolute;left:179px;top:366px;width:3px;height:1px;background:#333;"></div>
<div style="position:absolute;left:179px;top:411px;width:3px;height:1px;background:#333;"></div>
<div style="position:absolute;left:179px;top:414px;width:3px;height:1px;background:#333;"></div>
<div style="position:absolute;left:179px;top:418px;width:3px;height:1px;background:#333;"></div>
<div style="position:absolute;left:179px;top:422px;width:3px;height:1px;background:#333;"></div>
<div style="position:absolute;left:179px;top:426px;width:3px;height:1px;background:#333;"></div>
<div style="position:absolute;left:179px;top:430px;width:3px;height:1px;background:#333;"></div>
<div style="position:absolute;left:179px;top:433px;width:3px;height:1px;background:#333;"></div>
<div style="position:absolute;left:179px;top:437px;width:3px;height:1px;background:#333;"></div>
<div style="position:absolute;left:179px;top:442px;width:3px;height:1px;background:#333;"></div>
<div style="position:absolute;left:177px;top:450px;width:5px;height:7px;background:#111;"></div>
<div id="f31" style="position:absolute;left:137.87px;top:459.39px;white-space:nowrap;font-size:14.66px;font-weight:bold;color:#111;transform:scaleX(1.0194);transform-origin:0 0;">1.0</div>
<div id="f32" style="position:absolute;left:141.11px;top:497.87px;white-space:nowrap;font-size:13.83px;color:#111;transform:scaleX(0.9088);transform-origin:0 0;">0.5</div>
<div id="f33" style="position:absolute;left:136.71px;top:546.07px;white-space:nowrap;font-size:13.83px;font-weight:bold;color:#111;transform:scaleX(1.1375);transform-origin:0 0;">0.0</div>
<div id="f34" style="position:absolute;left:133.0px;top:590.54px;white-space:nowrap;font-size:13.97px;color:#111;transform:scaleX(0.9283);transform-origin:0 0;">&minus;0.5</div>
<div id="f35" style="position:absolute;left:132.47px;top:628.69px;white-space:nowrap;font-size:14.66px;font-weight:bold;color:#111;transform:scaleX(1.0358);transform-origin:0 0;">-1.0</div>
<div style="position:absolute;left:178px;top:505px;width:5px;height:1px;background:#222;"></div>
<div style="position:absolute;left:178px;top:553px;width:5px;height:1px;background:#222;"></div>
<div style="position:absolute;left:178px;top:599px;width:5px;height:1px;background:#222;"></div>
<div style="position:absolute;left:178px;top:646px;width:5px;height:1px;background:#222;"></div>
<div class="a" style="left:183px;top:249px;width:1297px;height:21px;background:#d9d9d9;border-radius:0 6px 0 0;border-top:1px solid #111;border-right:1px solid #111;box-sizing:border-box;"></div>
<div id="f36" style="position:absolute;left:190px;top:252.5px;white-space:nowrap;font-size:13px;color:#111;transform:scaleX(1.1568);transform-origin:0 0;">rtty_test</div>
<div style="position:absolute;left:183px;top:458px;width:1297px;height:190px;background:#3232c8;"></div>
<div style="position:absolute;left:183px;top:485px;width:1297px;height:135px;background:#6464dc;"></div>
<div style="position:absolute;left:1480px;top:458px;width:27px;height:1px;background:#111;"></div>
<div style="position:absolute;left:1480px;top:270px;width:1px;height:378px;background:#111;"></div>
<svg class="a" style="left:183px;top:270px" width="1297" height="188" viewBox="183 270 1297 188">
<defs><linearGradient id="band" gradientUnits="userSpaceOnUse" x1="0" y1="376" x2="0" y2="408"><stop offset="0" stop-color="#000"/><stop offset="0.0625" stop-color="#02121a"/><stop offset="0.1875" stop-color="#06243e"/><stop offset="0.28" stop-color="#0e2460"/><stop offset="0.344" stop-color="#441c94"/><stop offset="0.416" stop-color="#b02aa0"/><stop offset="0.4625" stop-color="#ff8a40"/><stop offset="0.49" stop-color="#fff0b0"/><stop offset="0.54" stop-color="#ffffff"/><stop offset="0.59" stop-color="#fff0b0"/><stop offset="0.63" stop-color="#ff8a40"/><stop offset="0.675" stop-color="#b02aa0"/><stop offset="0.725" stop-color="#441c94"/><stop offset="0.8" stop-color="#0e2460"/><stop offset="0.875" stop-color="#06243e"/><stop offset="0.95" stop-color="#02121a"/><stop offset="1" stop-color="#000"/></linearGradient><linearGradient id="band2" gradientUnits="userSpaceOnUse" x1="0" y1="380.3" x2="0" y2="412.3"><stop offset="0" stop-color="#000"/><stop offset="0.0625" stop-color="#02121a"/><stop offset="0.1875" stop-color="#06243e"/><stop offset="0.28" stop-color="#0e2460"/><stop offset="0.344" stop-color="#441c94"/><stop offset="0.416" stop-color="#b02aa0"/><stop offset="0.4625" stop-color="#ff8a40"/><stop offset="0.49" stop-color="#fff0b0"/><stop offset="0.54" stop-color="#ffffff"/><stop offset="0.59" stop-color="#fff0b0"/><stop offset="0.63" stop-color="#ff8a40"/><stop offset="0.675" stop-color="#b02aa0"/><stop offset="0.725" stop-color="#441c94"/><stop offset="0.8" stop-color="#0e2460"/><stop offset="0.875" stop-color="#06243e"/><stop offset="0.95" stop-color="#02121a"/><stop offset="1" stop-color="#000"/></linearGradient><linearGradient id="st" gradientUnits="userSpaceOnUse" x1="0" y1="290" x2="0" y2="458"><stop offset="0" stop-color="#000" stop-opacity="0"/><stop offset="0.089" stop-color="#04101e"/><stop offset="0.179" stop-color="#0c2456"/><stop offset="0.268" stop-color="#28308a"/><stop offset="0.357" stop-color="#5e28a8"/><stop offset="0.446" stop-color="#a02cb0"/><stop offset="0.512" stop-color="#d04490"/><stop offset="0.554" stop-color="#ff7050"/><stop offset="0.577" stop-color="#ffa840"/><stop offset="0.595" stop-color="#fff0c0"/><stop offset="0.607" stop-color="#ffffff"/><stop offset="0.649" stop-color="#ffffff"/><stop offset="0.667" stop-color="#ffe080"/><stop offset="0.69" stop-color="#ff9040"/><stop offset="0.726" stop-color="#e85a80"/><stop offset="0.774" stop-color="#c83ca0"/><stop offset="0.893" stop-color="#a830b0"/><stop offset="1" stop-color="#9a2cb0"/></linearGradient></defs>
<rect x="183" y="270" width="1297" height="188" fill="#000"/>
<rect x="183" y="271" width="1297" height="13" fill="#01070a" opacity="1"/>
<rect x="183" y="284" width="1297" height="4" fill="#041820" opacity="1"/>
<rect x="183" y="289.8" width="1297" height="2" fill="#46208a" opacity="1"/>
<rect x="183" y="292.5" width="1297" height="1.5" fill="#1a3c90" opacity="1"/>
<rect x="183" y="294.8" width="1297" height="7" fill="#03141c" opacity="1"/>
<rect x="183" y="303.6" width="1297" height="2" fill="#4a2290" opacity="1"/>
<rect x="183" y="307.5" width="1297" height="1.5" fill="#1a4090" opacity="1"/>
<rect x="183" y="309.8" width="1297" height="3.5" fill="#041820" opacity="1"/>
<rect x="183" y="313.5" width="1297" height="25" fill="#01070a" opacity="1"/>
<rect x="183" y="358.5" width="1297" height="1" fill="#04202a" opacity="1"/>
<rect x="183" y="367.5" width="1297" height="1" fill="#04202a" opacity="1"/>
<rect x="183" y="410" width="1297" height="1" fill="#083044" opacity="1"/>
<rect x="183" y="436" width="1297" height="1" fill="#04202a" opacity="1"/>
<rect x="183" y="376" width="318.0" height="32" fill="url(#band)"/>
<rect x="501" y="380.3" width="73.6" height="32" fill="url(#band2)"/>
<rect x="574.6" y="376" width="159.3" height="32" fill="url(#band)"/>
<rect x="733.9" y="380.3" width="110.4" height="32" fill="url(#band2)"/>
<rect x="844.3" y="376" width="297.2" height="32" fill="url(#band)"/>
<rect x="1141.5" y="380.3" width="165.1" height="32" fill="url(#band2)"/>
<rect x="1306.6" y="376" width="173.4" height="32" fill="url(#band)"/>
<path d="M501.8 295 L504.4 295 L505.8 372 L505.8 458 L500.3 458 L500.3 372 Z" fill="url(#st)" opacity="0.45"/>
<path d="M501.8 295 L504.4 295 L504.6 375 L504.6 458 L501.5 458 L501.5 375 Z" fill="url(#st)"/>
<path d="M514.1 295 L516.7 295 L517.8 372 L517.8 458 L513.0 458 L513.0 372 Z" fill="url(#st)" opacity="0.45"/>
<path d="M514.2 295 L516.6 295 L516.6 375 L516.6 458 L514.2 458 L514.2 375 Z" fill="url(#st)"/>
<path d="M521.2 295 L523.8 295 L526.3 372 L526.3 458 L518.8 458 L518.8 372 Z" fill="url(#st)" opacity="0.45"/>
<path d="M521.2 295 L523.8 295 L525.1 375 L525.1 458 L520.0 458 L520.0 375 Z" fill="url(#st)"/>
<path d="M527.1 295 L529.7 295 L530.5 372 L530.5 458 L526.3 458 L526.3 372 Z" fill="url(#st)" opacity="0.45"/>
<path d="M527.5 295 L529.3 295 L529.3 375 L529.3 458 L527.5 458 L527.5 375 Z" fill="url(#st)"/>
<path d="M532.2 295 L534.8 295 L535.7 372 L535.7 458 L531.2 458 L531.2 372 Z" fill="url(#st)" opacity="0.45"/>
<path d="M532.4 295 L534.5 295 L534.5 375 L534.5 458 L532.4 458 L532.4 375 Z" fill="url(#st)"/>
<path d="M537.5 295 L540.1 295 L541.6 372 L541.6 458 L536.1 458 L536.1 372 Z" fill="url(#st)" opacity="0.45"/>
<path d="M537.5 295 L540.1 295 L540.4 375 L540.4 458 L537.3 458 L537.3 375 Z" fill="url(#st)"/>
<path d="M547.8 295 L550.4 295 L551.7 372 L551.7 458 L546.5 458 L546.5 372 Z" fill="url(#st)" opacity="0.45"/>
<path d="M547.8 295 L550.4 295 L550.5 375 L550.5 458 L547.7 458 L547.7 375 Z" fill="url(#st)"/>
<path d="M556.6 295 L559.1 295 L560.5 372 L560.5 458 L555.2 458 L555.2 372 Z" fill="url(#st)" opacity="0.45"/>
<path d="M556.6 295 L559.1 295 L559.3 375 L559.3 458 L556.4 458 L556.4 375 Z" fill="url(#st)"/>
<path d="M562.6 295 L565.2 295 L567.6 372 L567.6 458 L560.2 458 L560.2 372 Z" fill="url(#st)" opacity="0.45"/>
<path d="M562.6 295 L565.2 295 L566.4 375 L566.4 458 L561.4 458 L561.4 375 Z" fill="url(#st)"/>
<path d="M571.5 295 L574.1 295 L575.4 372 L575.4 458 L570.2 458 L570.2 372 Z" fill="url(#st)" opacity="0.45"/>
<path d="M571.5 295 L574.1 295 L574.2 375 L574.2 458 L571.4 458 L571.4 375 Z" fill="url(#st)"/>
<path d="M734.5 295 L737.1 295 L738.5 372 L738.5 458 L733.1 458 L733.1 372 Z" fill="url(#st)" opacity="0.45"/>
<path d="M734.5 295 L737.1 295 L737.3 375 L737.3 458 L734.3 458 L734.3 375 Z" fill="url(#st)"/>
<path d="M746.8 295 L749.4 295 L750.8 372 L750.8 458 L745.4 458 L745.4 372 Z" fill="url(#st)" opacity="0.45"/>
<path d="M746.8 295 L749.4 295 L749.6 375 L749.6 458 L746.6 458 L746.6 375 Z" fill="url(#st)"/>
<path d="M752.7 295 L755.3 295 L756.8 372 L756.8 458 L751.2 458 L751.2 372 Z" fill="url(#st)" opacity="0.45"/>
<path d="M752.7 295 L755.3 295 L755.6 375 L755.6 458 L752.4 458 L752.4 375 Z" fill="url(#st)"/>
<path d="M763.1 295 L765.6 295 L769.8 372 L769.8 458 L758.9 458 L758.9 372 Z" fill="url(#st)" opacity="0.45"/>
<path d="M763.1 295 L765.6 295 L768.6 375 L768.6 458 L760.1 458 L760.1 375 Z" fill="url(#st)"/>
<path d="M771.7 295 L774.3 295 L775.8 372 L775.8 458 L770.2 458 L770.2 372 Z" fill="url(#st)" opacity="0.45"/>
<path d="M771.7 295 L774.3 295 L774.6 375 L774.6 458 L771.4 458 L771.4 375 Z" fill="url(#st)"/>
<path d="M781.2 295 L783.8 295 L790.1 372 L790.1 458 L775.0 458 L775.0 372 Z" fill="url(#st)" opacity="0.45"/>
<path d="M781.2 295 L783.8 295 L788.9 375 L788.9 458 L776.2 458 L776.2 375 Z" fill="url(#st)"/>
<path d="M792.2 295 L794.8 295 L798.2 372 L798.2 458 L788.9 458 L788.9 372 Z" fill="url(#st)" opacity="0.45"/>
<path d="M792.2 295 L794.8 295 L797.0 375 L797.0 458 L790.1 458 L790.1 375 Z" fill="url(#st)"/>
<path d="M808.7 295 L811.3 295 L816.8 372 L816.8 458 L803.2 458 L803.2 372 Z" fill="url(#st)" opacity="0.45"/>
<path d="M808.7 295 L811.3 295 L815.6 375 L815.6 458 L804.4 458 L804.4 375 Z" fill="url(#st)"/>
<path d="M825.0 295 L827.6 295 L831.2 372 L831.2 458 L821.5 458 L821.5 372 Z" fill="url(#st)" opacity="0.45"/>
<path d="M825.0 295 L827.6 295 L830.0 375 L830.0 458 L822.7 458 L822.7 375 Z" fill="url(#st)"/>
<path d="M832.7 295 L835.2 295 L837.9 372 L837.9 458 L830.0 458 L830.0 372 Z" fill="url(#st)" opacity="0.45"/>
<path d="M832.7 295 L835.2 295 L836.7 375 L836.7 458 L831.2 458 L831.2 375 Z" fill="url(#st)"/>
<path d="M841.1 295 L843.7 295 L845.1 372 L845.1 458 L839.7 458 L839.7 372 Z" fill="url(#st)" opacity="0.45"/>
<path d="M841.1 295 L843.7 295 L843.9 375 L843.9 458 L840.9 458 L840.9 375 Z" fill="url(#st)"/>
<path d="M1141.9 295 L1144.5 295 L1145.7 372 L1145.7 458 L1140.7 458 L1140.7 372 Z" fill="url(#st)" opacity="0.45"/>
<path d="M1141.9 295 L1144.5 295 L1144.5 375 L1144.5 458 L1141.9 458 L1141.9 375 Z" fill="url(#st)"/>
<path d="M1149.8 295 L1152.3 295 L1155.9 372 L1155.9 458 L1146.2 458 L1146.2 372 Z" fill="url(#st)" opacity="0.45"/>
<path d="M1149.8 295 L1152.3 295 L1154.7 375 L1154.7 458 L1147.4 458 L1147.4 375 Z" fill="url(#st)"/>
<path d="M1160.5 295 L1163.1 295 L1164.5 372 L1164.5 458 L1159.2 458 L1159.2 372 Z" fill="url(#st)" opacity="0.45"/>
<path d="M1160.5 295 L1163.1 295 L1163.3 375 L1163.3 458 L1160.4 458 L1160.4 375 Z" fill="url(#st)"/>
<path d="M1170.5 295 L1173.0 295 L1174.4 372 L1174.4 458 L1169.1 458 L1169.1 372 Z" fill="url(#st)" opacity="0.45"/>
<path d="M1170.5 295 L1173.0 295 L1173.2 375 L1173.2 458 L1170.3 458 L1170.3 375 Z" fill="url(#st)"/>
<path d="M1179.3 295 L1181.9 295 L1183.1 372 L1183.1 458 L1178.1 458 L1178.1 372 Z" fill="url(#st)" opacity="0.45"/>
<path d="M1179.3 295 L1181.9 295 L1181.9 375 L1181.9 458 L1179.3 458 L1179.3 375 Z" fill="url(#st)"/>
<path d="M1189.0 295 L1191.6 295 L1193.0 372 L1193.0 458 L1187.7 458 L1187.7 372 Z" fill="url(#st)" opacity="0.45"/>
<path d="M1189.0 295 L1191.6 295 L1191.8 375 L1191.8 458 L1188.9 458 L1188.9 375 Z" fill="url(#st)"/>
<path d="M1199.9 295 L1202.5 295 L1206.3 372 L1206.3 458 L1196.0 458 L1196.0 372 Z" fill="url(#st)" opacity="0.45"/>
<path d="M1199.9 295 L1202.5 295 L1205.1 375 L1205.1 458 L1197.2 458 L1197.2 375 Z" fill="url(#st)"/>
<path d="M1211.1 295 L1213.7 295 L1218.9 372 L1218.9 458 L1205.9 458 L1205.9 372 Z" fill="url(#st)" opacity="0.45"/>
<path d="M1211.1 295 L1213.7 295 L1217.7 375 L1217.7 458 L1207.1 458 L1207.1 375 Z" fill="url(#st)"/>
<path d="M1224.3 295 L1226.9 295 L1229.8 372 L1229.8 458 L1221.4 458 L1221.4 372 Z" fill="url(#st)" opacity="0.45"/>
<path d="M1224.3 295 L1226.9 295 L1228.6 375 L1228.6 458 L1222.6 458 L1222.6 375 Z" fill="url(#st)"/>
<path d="M1234.8 295 L1237.4 295 L1243.1 372 L1243.1 458 L1229.1 458 L1229.1 372 Z" fill="url(#st)" opacity="0.45"/>
<path d="M1234.8 295 L1237.4 295 L1241.9 375 L1241.9 458 L1230.3 458 L1230.3 375 Z" fill="url(#st)"/>
<path d="M1244.0 295 L1246.6 295 L1247.7 372 L1247.7 458 L1243.0 458 L1243.0 372 Z" fill="url(#st)" opacity="0.45"/>
<path d="M1244.2 295 L1246.5 295 L1246.5 375 L1246.5 458 L1244.2 458 L1244.2 375 Z" fill="url(#st)"/>
<path d="M1258.5 295 L1261.0 295 L1268.1 372 L1268.1 458 L1251.4 458 L1251.4 372 Z" fill="url(#st)" opacity="0.45"/>
<path d="M1258.5 295 L1261.0 295 L1266.9 375 L1266.9 458 L1252.6 458 L1252.6 375 Z" fill="url(#st)"/>
<path d="M1273.0 295 L1275.6 295 L1279.6 372 L1279.6 458 L1269.0 458 L1269.0 372 Z" fill="url(#st)" opacity="0.45"/>
<path d="M1273.0 295 L1275.6 295 L1278.4 375 L1278.4 458 L1270.2 458 L1270.2 375 Z" fill="url(#st)"/>
<path d="M1287.2 295 L1289.8 295 L1292.8 372 L1292.8 458 L1284.1 458 L1284.1 372 Z" fill="url(#st)" opacity="0.45"/>
<path d="M1287.2 295 L1289.8 295 L1291.6 375 L1291.6 458 L1285.3 458 L1285.3 375 Z" fill="url(#st)"/>
<path d="M1295.4 295 L1298.0 295 L1300.6 372 L1300.6 458 L1292.8 458 L1292.8 372 Z" fill="url(#st)" opacity="0.45"/>
<path d="M1295.4 295 L1298.0 295 L1299.4 375 L1299.4 458 L1294.0 458 L1294.0 375 Z" fill="url(#st)"/>
<path d="M1303.9 295 L1306.5 295 L1307.4 372 L1307.4 458 L1303.0 458 L1303.0 372 Z" fill="url(#st)" opacity="0.45"/>
<path d="M1304.2 295 L1306.2 295 L1306.2 375 L1306.2 458 L1304.2 458 L1304.2 375 Z" fill="url(#st)"/>
</svg>
<div style="position:absolute;left:1514px;top:242px;width:21px;height:466px;background:#f0f0f0;"></div>
<div style="position:absolute;left:1524px;top:262px;width:2px;height:402px;background:#8a8a8a;border-radius:1px;"></div>
<div style="position:absolute;left:1px;top:686px;width:1534px;height:22px;background:#f0f0f0;"></div>
<div style="position:absolute;left:717px;top:696px;width:631px;height:3px;background:#7a7a7a;border-radius:1.5px;"></div>
<div style="position:absolute;left:1px;top:708px;width:1534px;height:71px;background:#f5f7fc;"></div>
<div style="position:absolute;left:1px;top:708px;width:1534px;height:1px;background:#d0d0d0;"></div>
<div style="position:absolute;left:1px;top:778px;width:1534px;height:1px;background:#c4c4c4;"></div>
<div style="position:absolute;left:6px;top:716px;width:5px;height:2px;background:#dcdcdc;"></div>
<div style="position:absolute;left:6px;top:721px;width:5px;height:2px;background:#dcdcdc;"></div>
<div style="position:absolute;left:6px;top:726px;width:5px;height:2px;background:#dcdcdc;"></div>
<div style="position:absolute;left:6px;top:731px;width:5px;height:2px;background:#dcdcdc;"></div>
<div style="position:absolute;left:6px;top:736px;width:5px;height:2px;background:#dcdcdc;"></div>
<div style="position:absolute;left:6px;top:741px;width:5px;height:2px;background:#dcdcdc;"></div>
<div style="position:absolute;left:6px;top:746px;width:5px;height:2px;background:#dcdcdc;"></div>
<div style="position:absolute;left:6px;top:751px;width:5px;height:2px;background:#dcdcdc;"></div>
<div style="position:absolute;left:6px;top:756px;width:5px;height:2px;background:#dcdcdc;"></div>
<div style="position:absolute;left:6px;top:761px;width:5px;height:2px;background:#dcdcdc;"></div>
<div style="position:absolute;left:6px;top:766px;width:5px;height:2px;background:#dcdcdc;"></div>
<div style="position:absolute;left:13px;top:709px;width:1px;height:69px;background:#d0d0d0;"></div>
<div id="f37" style="position:absolute;left:20.5px;top:717px;white-space:nowrap;font-size:15px;color:#1a1a1a;-webkit-text-stroke:0.2px #1a1a1a;transform:scaleX(0.9028);transform-origin:0 0;">プロジェクトのサンプリング周波数 (Hz)</div>
<div style="position:absolute;left:274px;top:717px;width:1px;height:19px;background:#888;"></div>
<div style="position:absolute;left:274px;top:748px;width:1px;height:20px;background:#888;"></div>
<div id="f38" style="position:absolute;left:281px;top:717px;white-space:nowrap;font-size:15px;color:#1a1a1a;-webkit-text-stroke:0.2px #1a1a1a;transform:scaleX(0.8857);transform-origin:0 0;">スナップモード</div>
<div style="position:absolute;left:381px;top:717px;width:1px;height:19px;background:#888;"></div>
<div style="position:absolute;left:381px;top:748px;width:1px;height:20px;background:#888;"></div>
<div class="a" style="left:22px;top:745px;width:244px;height:27px;background:#fff;border:1px solid #8a8a8a;border-radius:2px;box-sizing:border-box;"></div>
<div id="f39" style="position:absolute;left:26.5px;top:750px;white-space:nowrap;font-size:14px;color:#1a1a1a;transform:scaleX(0.9888);transform-origin:0 0;">48000</div>
<svg class="a" style="left:248px;top:755px" width="12" height="7"><path d="M1 1 L6 6 L11 1" stroke="#333" stroke-width="1.1" fill="none"/></svg>
<div class="a" style="left:282px;top:745px;width:91px;height:27px;background:#fff;border:1px solid #d9d9d9;border-radius:3px;box-sizing:border-box;box-shadow:0 1px 0 #c8c8c8;"></div>
<div id="f40" style="position:absolute;left:286.5px;top:751px;white-space:nowrap;font-size:15px;color:#1a1a1a;-webkit-text-stroke:0.2px #1a1a1a;transform:scaleX(0.7333);transform-origin:0 0;">オフ</div>
<svg class="a" style="left:356px;top:755px" width="12" height="7"><path d="M1 1 L6 6 L11 1" stroke="#333" stroke-width="1.1" fill="none"/></svg>
<div class="a" style="left:390px;top:710px;width:427px;height:28px;background:#fff;border:1px solid #d9d9d9;border-radius:3px;box-sizing:border-box;box-shadow:0 1px 0 #c8c8c8;"></div>
<div id="f41" style="position:absolute;left:394.5px;top:716px;white-space:nowrap;font-size:15px;color:#1a1a1a;-webkit-text-stroke:0.2px #1a1a1a;transform:scaleX(0.9667);transform-origin:0 0;">選択範囲の開始点と終了点</div>
<svg class="a" style="left:800px;top:721px" width="12" height="7"><path d="M1 1 L6 6 L11 1" stroke="#333" stroke-width="1.1" fill="none"/></svg>
<div class="a" style="left:390px;top:745px;width:210px;height:27px;background:#d4d4d4;border-top:2px solid #7a7a7a;border-left:2px solid #7a7a7a;border-bottom:1px solid #e4e4e4;border-right:1px solid #e4e4e4;box-sizing:border-box;"></div>
<div style="position:absolute;left:421px;top:747px;width:32px;height:24px;background:#b8bcc8;"></div>
<div style="position:absolute;left:481px;top:747px;width:16px;height:24px;background:#b8bcc8;"></div>
<div style="position:absolute;left:525px;top:747px;width:3px;height:24px;background:#b8bcc8;"></div>
<div style="position:absolute;left:570px;top:747px;width:17px;height:24px;background:#b8bcc8;"></div>
<div style="position:absolute;left:586px;top:747px;width:13px;height:24px;background:#b8bcc8;border-left:1px solid #f4f4f4;box-sizing:border-box;"></div>
<svg class="a" style="left:589px;top:756px" width="8" height="4"><path d="M0 0 H8 L4.0 4 Z" fill="#111"/></svg>
<div class="t" style="left:379.98324022346367px;top:749.91px;width:36.03px;text-align:center;font-size:18.02px;color:#1a1ab4;-webkit-text-stroke:0px #1a1ab4;transform:scaleX(0.88);">0</div>
<div class="t" style="left:391.98324022346367px;top:749.91px;width:36.03px;text-align:center;font-size:18.02px;color:#1a1ab4;-webkit-text-stroke:0px #1a1ab4;transform:scaleX(0.88);">0</div>
<div class="t" style="left:440.7832402234637px;top:749.91px;width:36.03px;text-align:center;font-size:18.02px;color:#1a1ab4;-webkit-text-stroke:0px #1a1ab4;transform:scaleX(0.88);">0</div>
<div class="t" style="left:452.98324022346367px;top:749.91px;width:36.03px;text-align:center;font-size:18.02px;color:#1a1ab4;-webkit-text-stroke:0px #1a1ab4;transform:scaleX(0.88);">0</div>
<div class="t" style="left:484.48324022346367px;top:749.91px;width:36.03px;text-align:center;font-size:18.02px;color:#1a1ab4;-webkit-text-stroke:0px #1a1ab4;transform:scaleX(0.88);">0</div>
<div class="t" style="left:496.5832402234637px;top:749.91px;width:36.03px;text-align:center;font-size:18.02px;color:#1a1ab4;-webkit-text-stroke:0px #1a1ab4;transform:scaleX(0.88);">0</div>
<div class="t" style="left:516.6832402234637px;top:749.91px;width:36.03px;text-align:center;font-size:18.02px;color:#1a1ab4;-webkit-text-stroke:0px #1a1ab4;transform:scaleX(0.88);">0</div>
<div class="t" style="left:528.8832402234636px;top:749.91px;width:36.03px;text-align:center;font-size:18.02px;color:#1a1ab4;-webkit-text-stroke:0px #1a1ab4;transform:scaleX(0.88);">0</div>
<div class="t" style="left:541.0832402234637px;top:749.91px;width:36.03px;text-align:center;font-size:18.02px;color:#1a1ab4;-webkit-text-stroke:0px #1a1ab4;transform:scaleX(0.88);">0</div>
<div class="t" style="left:508.7832402234636px;top:749.91px;width:36.03px;text-align:center;font-size:18.02px;color:#1a1ab4;-webkit-text-stroke:0px #1a1ab4;transform:scaleX(1);">.</div>
<div class="t" style="left:402.9090909090909px;top:749.45px;width:68.18px;text-align:center;font-size:17.05px;color:#1a1ab4;-webkit-text-stroke:0.2px #1a1ab4;">時間</div>
<div class="t" style="left:454.80909090909086px;top:749.45px;width:68.18px;text-align:center;font-size:17.05px;color:#1a1ab4;-webkit-text-stroke:0.2px #1a1ab4;">分</div>
<div class="t" style="left:543.3090909090909px;top:749.45px;width:68.18px;text-align:center;font-size:17.05px;color:#1a1ab4;-webkit-text-stroke:0.2px #1a1ab4;">秒</div>
<div class="a" style="left:608px;top:745px;width:209px;height:27px;background:#d4d4d4;border-top:2px solid #7a7a7a;border-left:2px solid #7a7a7a;border-bottom:1px solid #e4e4e4;border-right:1px solid #e4e4e4;box-sizing:border-box;"></div>
<div style="position:absolute;left:639px;top:747px;width:32px;height:24px;background:#b8bcc8;"></div>
<div style="position:absolute;left:699px;top:747px;width:16px;height:24px;background:#b8bcc8;"></div>
<div style="position:absolute;left:743px;top:747px;width:3px;height:24px;background:#b8bcc8;"></div>
<div style="position:absolute;left:788px;top:747px;width:17px;height:24px;background:#b8bcc8;"></div>
<div style="position:absolute;left:803px;top:747px;width:13px;height:24px;background:#b8bcc8;border-left:1px solid #f4f4f4;box-sizing:border-box;"></div>
<svg class="a" style="left:807px;top:756px" width="8" height="4"><path d="M0 0 H8 L4.0 4 Z" fill="#111"/></svg>
<div class="t" style="left:597.9832402234637px;top:749.91px;width:36.03px;text-align:center;font-size:18.02px;color:#1a1ab4;-webkit-text-stroke:0px #1a1ab4;transform:scaleX(0.88);">0</div>
<div class="t" style="left:609.9832402234637px;top:749.91px;width:36.03px;text-align:center;font-size:18.02px;color:#1a1ab4;-webkit-text-stroke:0px #1a1ab4;transform:scaleX(0.88);">0</div>
<div class="t" style="left:658.7832402234636px;top:749.91px;width:36.03px;text-align:center;font-size:18.02px;color:#1a1ab4;-webkit-text-stroke:0px #1a1ab4;transform:scaleX(0.88);">0</div>
<div class="t" style="left:670.9832402234637px;top:749.91px;width:36.03px;text-align:center;font-size:18.02px;color:#1a1ab4;-webkit-text-stroke:0px #1a1ab4;transform:scaleX(0.88);">0</div>
<div class="t" style="left:702.4832402234637px;top:749.91px;width:36.03px;text-align:center;font-size:18.02px;color:#1a1ab4;-webkit-text-stroke:0px #1a1ab4;transform:scaleX(0.88);">0</div>
<div class="t" style="left:714.5832402234637px;top:749.91px;width:36.03px;text-align:center;font-size:18.02px;color:#1a1ab4;-webkit-text-stroke:0px #1a1ab4;transform:scaleX(0.88);">0</div>
<div class="t" style="left:734.6832402234637px;top:749.91px;width:36.03px;text-align:center;font-size:18.02px;color:#1a1ab4;-webkit-text-stroke:0px #1a1ab4;transform:scaleX(0.88);">0</div>
<div class="t" style="left:746.8832402234636px;top:749.91px;width:36.03px;text-align:center;font-size:18.02px;color:#1a1ab4;-webkit-text-stroke:0px #1a1ab4;transform:scaleX(0.88);">0</div>
<div class="t" style="left:759.0832402234637px;top:749.91px;width:36.03px;text-align:center;font-size:18.02px;color:#1a1ab4;-webkit-text-stroke:0px #1a1ab4;transform:scaleX(0.88);">0</div>
<div class="t" style="left:726.7832402234636px;top:749.91px;width:36.03px;text-align:center;font-size:18.02px;color:#1a1ab4;-webkit-text-stroke:0px #1a1ab4;transform:scaleX(1);">.</div>
<div class="t" style="left:620.9090909090909px;top:749.45px;width:68.18px;text-align:center;font-size:17.05px;color:#1a1ab4;-webkit-text-stroke:0.2px #1a1ab4;">時間</div>
<div class="t" style="left:672.8090909090909px;top:749.45px;width:68.18px;text-align:center;font-size:17.05px;color:#1a1ab4;-webkit-text-stroke:0.2px #1a1ab4;">分</div>
<div class="t" style="left:761.3090909090909px;top:749.45px;width:68.18px;text-align:center;font-size:17.05px;color:#1a1ab4;-webkit-text-stroke:0.2px #1a1ab4;">秒</div>
<div style="position:absolute;left:829px;top:714px;width:5px;height:2px;background:#dcdcdc;"></div>
<div style="position:absolute;left:829px;top:719px;width:5px;height:2px;background:#dcdcdc;"></div>
<div style="position:absolute;left:829px;top:724px;width:5px;height:2px;background:#dcdcdc;"></div>
<div style="position:absolute;left:829px;top:729px;width:5px;height:2px;background:#dcdcdc;"></div>
<div style="position:absolute;left:829px;top:734px;width:5px;height:2px;background:#dcdcdc;"></div>
<div style="position:absolute;left:829px;top:739px;width:5px;height:2px;background:#dcdcdc;"></div>
<div style="position:absolute;left:829px;top:744px;width:5px;height:2px;background:#dcdcdc;"></div>
<div style="position:absolute;left:829px;top:749px;width:5px;height:2px;background:#dcdcdc;"></div>
<div style="position:absolute;left:829px;top:754px;width:5px;height:2px;background:#dcdcdc;"></div>
<div style="position:absolute;left:829px;top:759px;width:5px;height:2px;background:#dcdcdc;"></div>
<div style="position:absolute;left:829px;top:764px;width:5px;height:2px;background:#dcdcdc;"></div>
<div style="position:absolute;left:829px;top:769px;width:5px;height:2px;background:#dcdcdc;"></div>
<div style="position:absolute;left:836px;top:709px;width:1px;height:69px;background:#d0d0d0;"></div>
<div class="a" style="left:840px;top:721px;width:287px;height:43px;background:#d4d4d4;border-top:2px solid #7a7a7a;border-left:2px solid #7a7a7a;border-bottom:1px solid #e4e4e4;border-right:1px solid #e4e4e4;box-sizing:border-box;"></div>
<div style="position:absolute;left:889px;top:723px;width:67px;height:40px;background:#b8bcc8;"></div>
<div style="position:absolute;left:1001px;top:723px;width:34px;height:40px;background:#b8bcc8;"></div>
<div style="position:absolute;left:1080px;top:723px;width:34px;height:40px;background:#b8bcc8;"></div>
<div style="position:absolute;left:1114px;top:723px;width:12px;height:40px;background:#b8bcc8;border-left:1px solid #f4f4f4;box-sizing:border-box;"></div>
<svg class="a" style="left:1116px;top:740.5px" width="8" height="5.0"><path d="M0 0 H8 L4.0 5.0 Z" fill="#111"/></svg>
<div class="t" style="left:820.9217877094973px;top:724.61px;width:68.16px;text-align:center;font-size:34.08px;color:#1a1ab4;-webkit-text-stroke:0.4px #1a1ab4;transform:scaleX(0.95);">0</div>
<div class="t" style="left:842.3217877094971px;top:724.61px;width:68.16px;text-align:center;font-size:34.08px;color:#1a1ab4;-webkit-text-stroke:0.4px #1a1ab4;transform:scaleX(0.95);">0</div>
<div class="t" style="left:933.2217877094972px;top:724.61px;width:68.16px;text-align:center;font-size:34.08px;color:#1a1ab4;-webkit-text-stroke:0.4px #1a1ab4;transform:scaleX(0.95);">0</div>
<div class="t" style="left:954.7217877094972px;top:724.61px;width:68.16px;text-align:center;font-size:34.08px;color:#1a1ab4;-webkit-text-stroke:0.4px #1a1ab4;transform:scaleX(0.95);">0</div>
<div class="t" style="left:1012.3217877094974px;top:724.61px;width:68.16px;text-align:center;font-size:34.08px;color:#1a1ab4;-webkit-text-stroke:0.4px #1a1ab4;transform:scaleX(0.95);">0</div>
<div class="t" style="left:1033.8217877094974px;top:724.61px;width:68.16px;text-align:center;font-size:34.08px;color:#1a1ab4;-webkit-text-stroke:0.4px #1a1ab4;transform:scaleX(0.95);">0</div>
<div class="t" style="left:855.1818181818182px;top:725.59px;width:133.64px;text-align:center;font-size:33.41px;color:#1a1ab4;-webkit-text-stroke:0.4px #1a1ab4;">時間</div>
<div class="t" style="left:950.7818181818182px;top:725.59px;width:133.64px;text-align:center;font-size:33.41px;color:#1a1ab4;-webkit-text-stroke:0.4px #1a1ab4;">分</div>
<div class="t" style="left:1029.8818181818183px;top:725.59px;width:133.64px;text-align:center;font-size:33.41px;color:#1a1ab4;-webkit-text-stroke:0.4px #1a1ab4;">秒</div>
<div style="position:absolute;left:1131px;top:709px;width:1px;height:69px;background:#c8c8c8;"></div>
<div style="position:absolute;left:1135px;top:709px;width:1px;height:69px;background:#c8c8c8;"></div>
<div style="position:absolute;left:1px;top:779px;width:1534px;height:29px;background:#f0f0f0;"></div>
<div style="position:absolute;left:12px;top:782px;width:1px;height:26px;background:#dadada;"></div>
<div style="position:absolute;left:226px;top:782px;width:1px;height:26px;background:#dadada;"></div>
<div style="position:absolute;left:1311px;top:782px;width:1px;height:26px;background:#dadada;"></div>
<div id="f42" style="position:absolute;left:18.5px;top:787px;white-space:nowrap;font-size:14px;color:#1a1a1a;-webkit-text-stroke:0.2px #1a1a1a;transform:scaleX(0.9286);transform-origin:0 0;">停止中。</div>
<div style="position:absolute;left:1529px;top:796px;width:2px;height:2px;background:#c0c0c0;"></div>
<div style="position:absolute;left:1525px;top:800px;width:2px;height:2px;background:#c0c0c0;"></div>
<div style="position:absolute;left:1529px;top:800px;width:2px;height:2px;background:#c0c0c0;"></div>
<div style="position:absolute;left:1521px;top:804px;width:2px;height:2px;background:#c0c0c0;"></div>
<div style="position:absolute;left:1525px;top:804px;width:2px;height:2px;background:#c0c0c0;"></div>
<div style="position:absolute;left:1529px;top:804px;width:2px;height:2px;background:#c0c0c0;"></div>
</div></div></body></html>
